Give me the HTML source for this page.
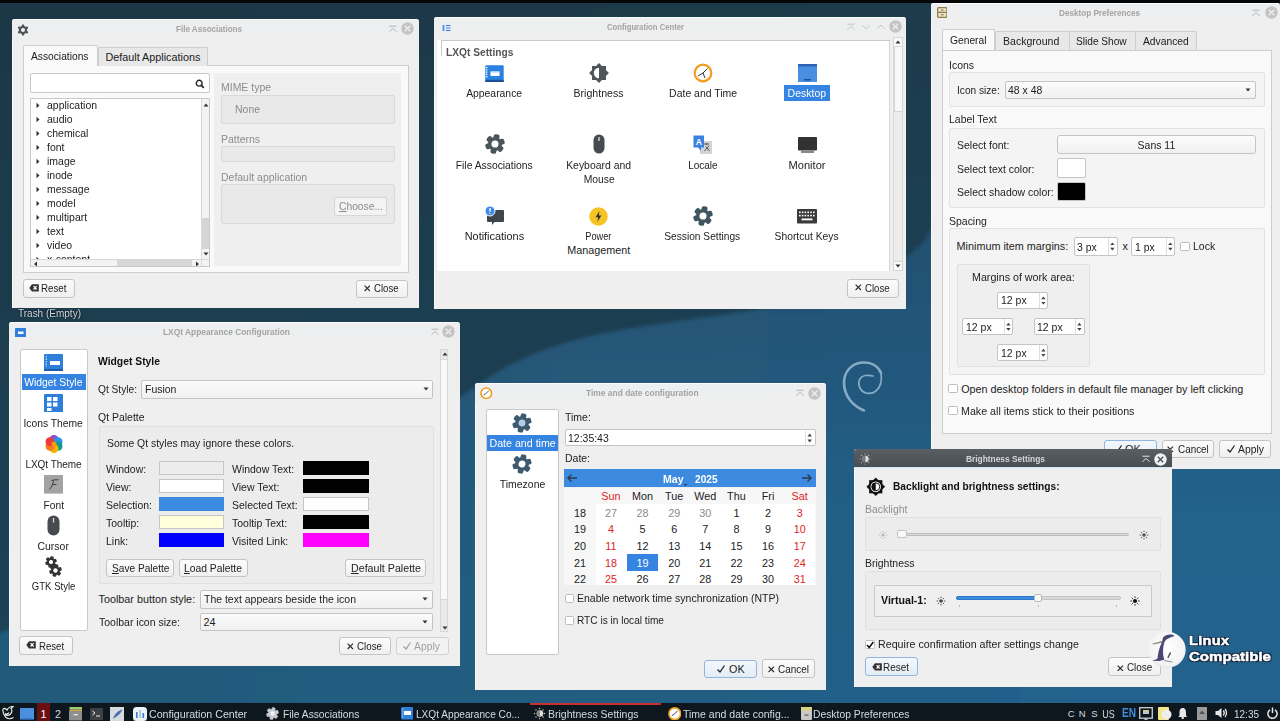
<!DOCTYPE html>
<html><head><meta charset="utf-8"><style>
*{box-sizing:border-box;margin:0;padding:0}
html,body{width:1280px;height:721px;overflow:hidden}
body{position:relative;font-family:"Liberation Sans",sans-serif;color:#222}
.win{background:#efefef;border-radius:3px 3px 0 0;overflow:hidden;box-shadow:inset 1px 0 0 #f9f9f9}
.btn{border:1px solid #c4c4c4;border-radius:3px;background:linear-gradient(#fcfcfc,#f0f0f0)}
.frm{border:1px solid #d4d4d4;background:#f6f6f6;border-radius:2px}
.wht{border:1px solid #c6c6c6;background:#fff;border-radius:2px}
</style></head><body>
<div class="" style="position:absolute;left:0.00px;top:0.00px;width:1280.00px;height:721.00px;background:#22506c"></div>
<svg style="position:absolute;left:0.00px;top:0.00px;" width="1280" height="721" viewBox="0 0 1280 721"><defs><filter id="bgb" filterUnits="userSpaceOnUse" x="-300" y="-300" width="1880" height="1321"><feGaussianBlur stdDeviation="60"/></filter><filter id="sb"><feGaussianBlur stdDeviation="1.6"/></filter><linearGradient id="dk" x1="0" y1="0" x2="0.5" y2="1"><stop offset="0" stop-color="#1d3745"/><stop offset="0.6" stop-color="#1e3d50"/><stop offset="1" stop-color="#204257"/></linearGradient></defs><g filter="url(#bgb)"><rect x="-301" y="-301" width="558" height="446" fill="#1e3846"/><rect x="255" y="-301" width="258" height="446" fill="#1e3a49"/><rect x="511" y="-301" width="258" height="446" fill="#1e3b4b"/><rect x="767" y="-301" width="258" height="446" fill="#1f3c4d"/><rect x="1023" y="-301" width="558" height="446" fill="#1f3d50"/><rect x="-301" y="143" width="558" height="146" fill="#1f4052"/><rect x="255" y="143" width="258" height="146" fill="#1f4052"/><rect x="511" y="143" width="258" height="146" fill="#214a63"/><rect x="767" y="143" width="258" height="146" fill="#23506e"/><rect x="1023" y="143" width="558" height="146" fill="#22506e"/><rect x="-301" y="287" width="558" height="146" fill="#235070"/><rect x="255" y="287" width="258" height="146" fill="#265575"/><rect x="511" y="287" width="258" height="146" fill="#27587a"/><rect x="767" y="287" width="258" height="146" fill="#24567a"/><rect x="1023" y="287" width="558" height="146" fill="#235c84"/><rect x="-301" y="432" width="558" height="146" fill="#245676"/><rect x="255" y="432" width="258" height="146" fill="#245a7c"/><rect x="511" y="432" width="258" height="146" fill="#245d82"/><rect x="767" y="432" width="258" height="146" fill="#235f86"/><rect x="1023" y="432" width="558" height="146" fill="#22628b"/><rect x="-301" y="576" width="558" height="446" fill="#245a7c"/><rect x="255" y="576" width="258" height="446" fill="#245b7e"/><rect x="511" y="576" width="258" height="446" fill="#245d82"/><rect x="767" y="576" width="258" height="446" fill="#23608a"/><rect x="1023" y="576" width="558" height="446" fill="#22628c"/></g><path filter="url(#sb)" d="M-20 -20H1300V0H1010C970 110 950 200 925 240C890 280 820 300 750 311C680 321 620 328 575 340C540 350 510 363 487 379C400 440 200 560 -20 640Z" fill="url(#dk)" opacity="0.92"/></svg>
<svg style="position:absolute;left:836.00px;top:356.00px;" width="54" height="60" viewBox="0 0 54 60"><g fill="none" stroke="#8fb3cc" opacity="0.92" stroke-linecap="round"><path d="M45 17C42 9 34 6 26 6.5C15 7.5 8 16 8 27C8 40 17 50 28 54.5" stroke-width="2.6"/><path d="M45 17C46 24 45 31 40 35C35 39 27 38 24 32C21 26 24 20 30 19.5C33 19.3 35 19.5 37 20" stroke-width="1.7"/></g></svg>
<div class="" style="position:absolute;left:0.00px;top:0.00px;width:1280.00px;height:3.00px;background:#050607"></div>
<div class="win" style="position:absolute;left:12.00px;top:19.00px;width:407.00px;height:289.00px;">
<div class="" style="position:absolute;left:0.00px;top:0.00px;width:407.00px;height:1.00px;background:#fbfbfb"></div>
<div class="" style="position:absolute;left:0.00px;top:1.00px;width:407.00px;height:20.00px;background:linear-gradient(#eceef0,#efefef)"></div>
<svg style="position:absolute;left:5.00px;top:4.50px;" width="12" height="12" viewBox="0 0 12 12"><polygon points="5.27,0.45 6.73,0.45 7.54,2.27 8.45,2.80 10.44,2.59 11.17,3.86 10.00,5.47 10.00,6.53 11.17,8.14 10.44,9.41 8.45,9.20 7.54,9.73 6.73,11.55 5.27,11.55 4.46,9.73 3.55,9.20 1.56,9.41 0.83,8.14 2.00,6.53 2.00,5.47 0.83,3.86 1.56,2.59 3.55,2.80 4.46,2.27" fill="#4d5359"/><circle cx="6" cy="6" r="2.02" fill="#efefef"/></svg>
<div style="position:absolute;white-space:nowrap;left:163.50px;top:3.88px;font-size:9px;line-height:12px;color:#a3a3a3;font-weight:bold;transform:scaleX(0.896);transform-origin:0 0;">File Associations</div>
<svg style="position:absolute;left:375.70px;top:5.00px;" width="10" height="10" viewBox="0 0 10 10"><path d="M1.5 2.2H8.5M1.5 7.8L5 4.3L8.5 7.8" stroke="#b4b4b4" stroke-width="1" fill="none"/></svg>
<svg style="position:absolute;left:389.20px;top:3.10px;" width="13" height="13" viewBox="0 0 13 13"><circle cx="6.5" cy="6.5" r="6.2" fill="#c4c4c4"/><path d="M3.8 3.8L9.2 9.2M9.2 3.8L3.8 9.2" stroke="#eeeeee" stroke-width="1.3"/></svg>
<div class="" style="position:absolute;left:10.50px;top:45.80px;width:386.00px;height:208.70px;border:1px solid #cdcdcd;background:#f9f9f9"></div>
<div class="" style="position:absolute;left:85.50px;top:28.00px;width:110.50px;height:18.50px;border:1px solid #cdcdcd;border-bottom:none;background:#e8e8e8;border-radius:2px 2px 0 0"></div>
<div class="" style="position:absolute;left:10.50px;top:26.00px;width:75.50px;height:20.80px;border:1px solid #cdcdcd;border-bottom:none;background:#f9f9f9;border-radius:2px 2px 0 0"></div>
<div style="position:absolute;white-space:nowrap;left:18.50px;top:30.26px;font-size:10.8px;line-height:14px;color:#202020;transform:scaleX(0.948);transform-origin:0 0;">Associations</div>
<div style="position:absolute;white-space:nowrap;left:93.50px;top:31.26px;font-size:10.8px;line-height:14px;color:#202020;">Default Applications</div>
<div class="" style="position:absolute;left:17.50px;top:54.00px;width:180.00px;height:20.00px;border:1px solid #c8c8c8;background:#fff;border-radius:2px"></div>
<svg style="position:absolute;left:183.00px;top:59.50px;" width="10" height="10" viewBox="0 0 10 10"><circle cx="4.2" cy="4.2" r="2.9" stroke="#222" stroke-width="1.4" fill="none"/><path d="M6.3 6.3L8.8 8.8" stroke="#222" stroke-width="1.7"/></svg>
<div class="" style="position:absolute;left:17.50px;top:78.50px;width:180.00px;height:169.50px;border:1px solid #c8c8c8;background:#fff;overflow:hidden">
<svg style="position:absolute;left:5.50px;top:3.70px;" width="4" height="7" viewBox="0 0 4 7"><path d="M0.5 0.8L3.5 3.5L0.5 6.2Z" fill="#333"/></svg>
<div style="position:absolute;white-space:nowrap;left:16.00px;top:-0.04px;font-size:10.8px;line-height:14px;color:#222;transform:scaleX(0.970);transform-origin:0 0;">application</div>
<svg style="position:absolute;left:5.50px;top:17.70px;" width="4" height="7" viewBox="0 0 4 7"><path d="M0.5 0.8L3.5 3.5L0.5 6.2Z" fill="#333"/></svg>
<div style="position:absolute;white-space:nowrap;left:16.00px;top:13.96px;font-size:10.8px;line-height:14px;color:#222;transform:scaleX(0.970);transform-origin:0 0;">audio</div>
<svg style="position:absolute;left:5.50px;top:31.70px;" width="4" height="7" viewBox="0 0 4 7"><path d="M0.5 0.8L3.5 3.5L0.5 6.2Z" fill="#333"/></svg>
<div style="position:absolute;white-space:nowrap;left:16.00px;top:27.96px;font-size:10.8px;line-height:14px;color:#222;transform:scaleX(0.970);transform-origin:0 0;">chemical</div>
<svg style="position:absolute;left:5.50px;top:45.70px;" width="4" height="7" viewBox="0 0 4 7"><path d="M0.5 0.8L3.5 3.5L0.5 6.2Z" fill="#333"/></svg>
<div style="position:absolute;white-space:nowrap;left:16.00px;top:41.96px;font-size:10.8px;line-height:14px;color:#222;transform:scaleX(0.970);transform-origin:0 0;">font</div>
<svg style="position:absolute;left:5.50px;top:59.70px;" width="4" height="7" viewBox="0 0 4 7"><path d="M0.5 0.8L3.5 3.5L0.5 6.2Z" fill="#333"/></svg>
<div style="position:absolute;white-space:nowrap;left:16.00px;top:55.96px;font-size:10.8px;line-height:14px;color:#222;transform:scaleX(0.970);transform-origin:0 0;">image</div>
<svg style="position:absolute;left:5.50px;top:73.70px;" width="4" height="7" viewBox="0 0 4 7"><path d="M0.5 0.8L3.5 3.5L0.5 6.2Z" fill="#333"/></svg>
<div style="position:absolute;white-space:nowrap;left:16.00px;top:69.96px;font-size:10.8px;line-height:14px;color:#222;transform:scaleX(0.970);transform-origin:0 0;">inode</div>
<svg style="position:absolute;left:5.50px;top:87.70px;" width="4" height="7" viewBox="0 0 4 7"><path d="M0.5 0.8L3.5 3.5L0.5 6.2Z" fill="#333"/></svg>
<div style="position:absolute;white-space:nowrap;left:16.00px;top:83.96px;font-size:10.8px;line-height:14px;color:#222;transform:scaleX(0.970);transform-origin:0 0;">message</div>
<svg style="position:absolute;left:5.50px;top:101.70px;" width="4" height="7" viewBox="0 0 4 7"><path d="M0.5 0.8L3.5 3.5L0.5 6.2Z" fill="#333"/></svg>
<div style="position:absolute;white-space:nowrap;left:16.00px;top:97.96px;font-size:10.8px;line-height:14px;color:#222;transform:scaleX(0.970);transform-origin:0 0;">model</div>
<svg style="position:absolute;left:5.50px;top:115.70px;" width="4" height="7" viewBox="0 0 4 7"><path d="M0.5 0.8L3.5 3.5L0.5 6.2Z" fill="#333"/></svg>
<div style="position:absolute;white-space:nowrap;left:16.00px;top:111.96px;font-size:10.8px;line-height:14px;color:#222;transform:scaleX(0.970);transform-origin:0 0;">multipart</div>
<svg style="position:absolute;left:5.50px;top:129.70px;" width="4" height="7" viewBox="0 0 4 7"><path d="M0.5 0.8L3.5 3.5L0.5 6.2Z" fill="#333"/></svg>
<div style="position:absolute;white-space:nowrap;left:16.00px;top:125.96px;font-size:10.8px;line-height:14px;color:#222;transform:scaleX(0.970);transform-origin:0 0;">text</div>
<svg style="position:absolute;left:5.50px;top:143.70px;" width="4" height="7" viewBox="0 0 4 7"><path d="M0.5 0.8L3.5 3.5L0.5 6.2Z" fill="#333"/></svg>
<div style="position:absolute;white-space:nowrap;left:16.00px;top:139.96px;font-size:10.8px;line-height:14px;color:#222;transform:scaleX(0.970);transform-origin:0 0;">video</div>
<svg style="position:absolute;left:5.50px;top:157.70px;" width="4" height="7" viewBox="0 0 4 7"><path d="M0.5 0.8L3.5 3.5L0.5 6.2Z" fill="#333"/></svg>
<div style="position:absolute;white-space:nowrap;left:16.00px;top:153.96px;font-size:10.8px;line-height:14px;color:#222;transform:scaleX(0.970);transform-origin:0 0;">x-content</div>
<div class="" style="position:absolute;left:170.50px;top:0.00px;width:9.50px;height:160.50px;background:#f3f3f3;border-left:1px solid #d8d8d8"></div>
<div class="" style="position:absolute;left:171.00px;top:119.50px;width:8.50px;height:30.50px;background:#d6d6d6"></div>
<svg style="position:absolute;left:171.50px;top:3.50px;" width="8" height="6" viewBox="0 0 8 6"><path d="M1.5 4.5L4 1.5L6.5 4.5Z" fill="#333"/></svg>
<svg style="position:absolute;left:171.50px;top:152.00px;" width="8" height="6" viewBox="0 0 8 6"><path d="M1.5 1.5L4 4.5L6.5 1.5Z" fill="#333"/></svg>
<div class="" style="position:absolute;left:0.00px;top:160.00px;width:170.50px;height:9.50px;background:#f3f3f3;border-top:1px solid #d8d8d8"></div>
<div class="" style="position:absolute;left:86.00px;top:160.50px;width:75.00px;height:8.50px;background:#d6d6d6"></div>
<svg style="position:absolute;left:1.50px;top:161.00px;" width="8" height="8" viewBox="0 0 8 8"><path d="M5 1.5L2 4L5 6.5Z" fill="#333"/></svg>
<svg style="position:absolute;left:162.50px;top:161.00px;" width="8" height="8" viewBox="0 0 8 8"><path d="M3 1.5L6 4L3 6.5Z" fill="#333"/></svg>
<div class="" style="position:absolute;left:170.50px;top:160.00px;width:9.50px;height:9.50px;background:#f3f3f3;border-left:1px solid #d8d8d8;border-top:1px solid #d8d8d8"></div>
</div>
<div class="" style="position:absolute;left:201.50px;top:53.50px;width:187.50px;height:193.50px;background:#efefef;border-radius:2px"></div>
<div style="position:absolute;white-space:nowrap;left:208.50px;top:60.96px;font-size:10.8px;line-height:14px;color:#8c8c8c;transform:scaleX(0.970);transform-origin:0 0;">MIME type</div>
<div class="" style="position:absolute;left:208.50px;top:75.50px;width:174.50px;height:29.00px;border:1px solid #d9d9d9;background:#e9e9e9;border-radius:2px"></div>
<div style="position:absolute;white-space:nowrap;left:223.00px;top:83.06px;font-size:10.8px;line-height:14px;color:#8a8a8a;transform:scaleX(0.970);transform-origin:0 0;">None</div>
<div style="position:absolute;white-space:nowrap;left:208.50px;top:112.76px;font-size:10.8px;line-height:14px;color:#8c8c8c;transform:scaleX(0.970);transform-origin:0 0;">Patterns</div>
<div class="" style="position:absolute;left:208.50px;top:127.00px;width:174.50px;height:16.00px;border:1px solid #d9d9d9;background:#e9e9e9;border-radius:2px"></div>
<div style="position:absolute;white-space:nowrap;left:208.50px;top:150.66px;font-size:10.8px;line-height:14px;color:#8c8c8c;transform:scaleX(0.970);transform-origin:0 0;">Default application</div>
<div class="" style="position:absolute;left:208.50px;top:165.00px;width:174.50px;height:39.50px;border:1px solid #d9d9d9;background:#e9e9e9;border-radius:2px"></div>
<div class="" style="position:absolute;left:321.50px;top:177.50px;width:53.50px;height:19.00px;border:1px solid #d6d6d6;background:#f3f3f3;border-radius:2px"></div>
<div style="position:absolute;white-space:nowrap;left:326.50px;top:180.26px;font-size:10.8px;line-height:14px;color:#8c8c8c;transform:scaleX(0.952);transform-origin:0 0;"><u>C</u>hoose...</div>
<div class="btn" style="position:absolute;left:10.50px;top:260.00px;width:52.50px;height:18.50px;"></div>
<svg style="position:absolute;left:17.30px;top:265.20px;" width="10" height="8" viewBox="0 0 10 8"><path d="M0.3 3.9L3 0.3H9.8V7.6H3Z" fill="#333"/><path d="M4.6 2.2L7.6 5.5M7.6 2.2L4.6 5.5" stroke="#fff" stroke-width="1.2"/></svg>
<div style="position:absolute;white-space:nowrap;left:29.30px;top:262.26px;font-size:10.8px;line-height:14px;color:#222;transform:scaleX(0.900);transform-origin:0 0;">Reset</div>
<div class="btn" style="position:absolute;left:343.50px;top:260.50px;width:52.50px;height:18.00px;"></div>
<svg style="position:absolute;left:351.50px;top:266.00px;" width="6.6" height="6.6" viewBox="0 0 6.6 6.6"><path d="M0.6 0.6L6 6M6 0.6L0.6 6" stroke="#2a2a2a" stroke-width="1.15"/></svg>
<div style="position:absolute;white-space:nowrap;left:361.80px;top:262.26px;font-size:10.8px;line-height:14px;color:#222;transform:scaleX(0.891);transform-origin:0 0;">Close</div>
</div>
<div style="position:absolute;white-space:nowrap;left:18.40px;top:306.26px;font-size:10.8px;line-height:14px;color:#cfd5da;transform:scaleX(0.926);transform-origin:0 0;text-shadow:0 0 2px #000">Trash (Empty)</div>
<div class="win" style="position:absolute;left:434.00px;top:17.00px;width:472.00px;height:292.00px;">
<div class="" style="position:absolute;left:0.00px;top:0.00px;width:472.00px;height:1.00px;background:#fbfbfb"></div>
<div class="" style="position:absolute;left:0.00px;top:1.00px;width:472.00px;height:20.00px;background:linear-gradient(#eceef0,#efefef)"></div>
<svg style="position:absolute;left:7.50px;top:6.50px;" width="9" height="8" viewBox="0 0 9 8"><rect x="0" y="0" width="9" height="8" fill="#e8eef5"/><rect x="0.5" y="1" width="2" height="6" fill="#5b9be0"/><path d="M4 1.5H8.5M4 4H8.5M4 6.5H8.5" stroke="#3a7bd5" stroke-width="1"/></svg>
<div style="position:absolute;white-space:nowrap;left:172.50px;top:3.88px;font-size:9px;line-height:12px;color:#a3a3a3;font-weight:bold;transform:scaleX(0.856);transform-origin:0 0;">Configuration Center</div>
<svg style="position:absolute;left:411.50px;top:5.00px;" width="10" height="10" viewBox="0 0 10 10"><path d="M1.5 2.2H8.5M1.5 7.8L5 4.3L8.5 7.8" stroke="#c4c4c4" stroke-width="1" fill="none"/></svg>
<svg style="position:absolute;left:426.50px;top:5.00px;" width="10" height="10" viewBox="0 0 10 10"><path d="M1.5 3.3L5 6.8L8.5 3.3" stroke="#c4c4c4" stroke-width="1" fill="none"/></svg>
<svg style="position:absolute;left:441.50px;top:5.00px;" width="10" height="10" viewBox="0 0 10 10"><path d="M1.5 6.5L5 3L8.5 6.5" stroke="#c4c4c4" stroke-width="1" fill="none"/></svg>
<svg style="position:absolute;left:454.50px;top:3.10px;" width="13" height="13" viewBox="0 0 13 13"><circle cx="6.5" cy="6.5" r="6.2" fill="#c4c4c4"/><path d="M3.8 3.8L9.2 9.2M9.2 3.8L3.8 9.2" stroke="#eeeeee" stroke-width="1.3"/></svg>
<div class="" style="position:absolute;left:2.50px;top:23.00px;width:453.50px;height:230.60px;border-right:1px solid #d6d6d6;background:#fff"></div>
<div class="" style="position:absolute;left:7.00px;top:23.00px;width:449.00px;height:1.00px;background:#c9c9c9"></div>
<div class="" style="position:absolute;left:7.00px;top:23.00px;width:1.00px;height:16.00px;background:#c9c9c9"></div>
<div style="position:absolute;white-space:nowrap;left:12.00px;top:27.66px;font-size:10.8px;line-height:14px;color:#555;font-weight:bold;transform:scaleX(0.945);transform-origin:0 0;">LXQt Settings</div>
<div class="" style="position:absolute;left:459.00px;top:19.50px;width:10.00px;height:234.50px;background:#ececec;border:1px solid #dadada"></div>
<div class="" style="position:absolute;left:459.50px;top:29.00px;width:9.00px;height:66.00px;background:#f8f8f8;border:1px solid #d6d6d6"></div>
<div class="" style="position:absolute;left:459.00px;top:19.50px;width:10.00px;height:10.00px;background:#fafafa;border:1px solid #d6d6d6"></div>
<svg style="position:absolute;left:460.00px;top:21.50px;" width="8" height="6" viewBox="0 0 8 6"><path d="M1.5 4.5L4 1.5L6.5 4.5Z" fill="#333"/></svg>
<div class="" style="position:absolute;left:459.00px;top:244.00px;width:10.00px;height:10.00px;background:#fafafa;border:1px solid #d6d6d6"></div>
<svg style="position:absolute;left:460.00px;top:246.00px;" width="8" height="6" viewBox="0 0 8 6"><path d="M1.5 1.5L4 4.5L6.5 1.5Z" fill="#333"/></svg>
<div class="" style="position:absolute;left:350.20px;top:67.80px;width:45.80px;height:16.60px;background:#3584e2"></div>
<div style="position:absolute;white-space:nowrap;left:31.18px;top:68.86px;font-size:10.8px;line-height:14px;color:#232323;transform:scaleX(0.961);transform-origin:50% 0;">Appearance</div>
<div style="position:absolute;white-space:nowrap;left:139.29px;top:68.86px;font-size:10.8px;line-height:14px;color:#232323;transform:scaleX(0.980);transform-origin:50% 0;">Brightness</div>
<div style="position:absolute;white-space:nowrap;left:233.58px;top:68.86px;font-size:10.8px;line-height:14px;color:#232323;transform:scaleX(0.968);transform-origin:50% 0;">Date and Time</div>
<div style="position:absolute;white-space:nowrap;left:352.99px;top:68.86px;font-size:10.8px;line-height:14px;color:#fff;transform:scaleX(0.972);transform-origin:50% 0;">Desktop</div>
<div style="position:absolute;white-space:nowrap;left:20.08px;top:140.76px;font-size:10.8px;line-height:14px;color:#232323;transform:scaleX(0.957);transform-origin:50% 0;">File Associations</div>
<div style="position:absolute;white-space:nowrap;left:131.17px;top:140.76px;font-size:10.8px;line-height:14px;color:#232323;transform:scaleX(0.966);transform-origin:50% 0;">Keyboard and</div>
<div style="position:absolute;white-space:nowrap;left:148.59px;top:154.76px;font-size:10.8px;line-height:14px;color:#232323;transform:scaleX(0.956);transform-origin:50% 0;">Mouse</div>
<div style="position:absolute;white-space:nowrap;left:252.79px;top:140.76px;font-size:10.8px;line-height:14px;color:#232323;transform:scaleX(0.927);transform-origin:50% 0;">Locale</div>
<div style="position:absolute;white-space:nowrap;left:354.79px;top:140.76px;font-size:10.8px;line-height:14px;color:#232323;transform:scaleX(1.027);transform-origin:50% 0;">Monitor</div>
<div style="position:absolute;white-space:nowrap;left:30.89px;top:211.86px;font-size:10.8px;line-height:14px;color:#232323;transform:scaleX(1.011);transform-origin:50% 0;">Notifications</div>
<div style="position:absolute;white-space:nowrap;left:149.49px;top:211.86px;font-size:10.8px;line-height:14px;color:#232323;transform:scaleX(0.849);transform-origin:50% 0;">Power</div>
<div style="position:absolute;white-space:nowrap;left:133.28px;top:225.86px;font-size:10.8px;line-height:14px;color:#232323;">Management</div>
<div style="position:absolute;white-space:nowrap;left:228.48px;top:211.86px;font-size:10.8px;line-height:14px;color:#232323;transform:scaleX(0.945);transform-origin:50% 0;">Session Settings</div>
<div style="position:absolute;white-space:nowrap;left:339.18px;top:211.86px;font-size:10.8px;line-height:14px;color:#232323;transform:scaleX(0.952);transform-origin:50% 0;">Shortcut Keys</div>
<svg style="position:absolute;left:50.50px;top:47.50px;" width="19" height="17" viewBox="0 0 19 17"><rect x="0.3" y="0.3" width="18.4" height="16.7" rx="1" fill="#2a82e0"/><rect x="0.3" y="14.8" width="18.4" height="2.2" fill="#1a4f95"/><rect x="5.5" y="6.5" width="9" height="4.5" fill="#fff"/><rect x="5.5" y="6.5" width="9" height="1.2" fill="#bcd8f6"/><rect x="1" y="1.8" width="1.4" height="1.4" fill="#e8f2fc"/><rect x="1" y="4.1" width="1.4" height="1.4" fill="#e8f2fc"/><rect x="1" y="6.4" width="1.4" height="1.4" fill="#e8f2fc"/><rect x="1" y="8.7" width="1.4" height="1.4" fill="#e8f2fc"/><rect x="1" y="11.0" width="1.4" height="1.4" fill="#e8f2fc"/></svg>
<svg style="position:absolute;left:154.80px;top:45.50px;" width="20" height="20" viewBox="0 0 20 20"><g transform="translate(10,10)"><rect x="-7" y="-7" width="14" height="14" fill="#4e565c"/><rect x="-7" y="-7" width="14" height="14" fill="#4e565c" transform="rotate(45)"/><path d="M0 -5.2A5.2 5.2 0 0 0 0 5.2Z" fill="#fff"/></g></svg>
<svg style="position:absolute;left:259.00px;top:46.00px;" width="20" height="20" viewBox="0 0 20 20"><circle cx="10" cy="10" r="8.3" fill="#fff" stroke="#f39c1f" stroke-width="2.2"/><path d="M10 10L14.5 5.5M10 10L5 13M10 10L12 15" stroke="#333" stroke-width="1" fill="none"/></svg>
<svg style="position:absolute;left:363.50px;top:47.00px;" width="19" height="18" viewBox="0 0 19 18"><rect x="0" y="0" width="19" height="18" fill="#4a8ee2"/><rect x="0" y="0" width="19" height="2.5" fill="#2c63b0"/><rect x="6" y="15" width="7" height="1.5" fill="#1d4f94"/></svg>
<svg style="position:absolute;left:50.50px;top:117.00px;" width="20" height="20" viewBox="0 0 20 20"><g transform="translate(10,10) rotate(12)"><circle r="6.86" fill="#4a545b"/><rect x="-2.94" y="-9.80" width="5.88" height="5.39" rx="1.96" fill="#4a545b" transform="rotate(0)"/><rect x="-2.94" y="-9.80" width="5.88" height="5.39" rx="1.96" fill="#4a545b" transform="rotate(60)"/><rect x="-2.94" y="-9.80" width="5.88" height="5.39" rx="1.96" fill="#4a545b" transform="rotate(120)"/><rect x="-2.94" y="-9.80" width="5.88" height="5.39" rx="1.96" fill="#4a545b" transform="rotate(180)"/><rect x="-2.94" y="-9.80" width="5.88" height="5.39" rx="1.96" fill="#4a545b" transform="rotate(240)"/><rect x="-2.94" y="-9.80" width="5.88" height="5.39" rx="1.96" fill="#4a545b" transform="rotate(300)"/><circle r="3.53" fill="#fff"/></g></svg>
<svg style="position:absolute;left:158.00px;top:117.00px;" width="14" height="20" viewBox="0 0 14 20"><rect x="1.5" y="0.5" width="11" height="19" rx="5.5" fill="#474b4f"/><path d="M7 3V7" stroke="#e8e8e8" stroke-width="1.2"/></svg>
<svg style="position:absolute;left:258.50px;top:117.50px;" width="20" height="20" viewBox="0 0 20 20"><rect x="7" y="6" width="12" height="13" fill="#d4d4d4"/><path d="M11 9H16M13.5 8V10M11.5 16L16 10.5M13 11.5L16.5 16" stroke="#555" stroke-width="1" fill="none"/><path d="M0.5 0.5H11V12.5H8V16L5 12.5H0.5Z" fill="#3a81e0"/><text x="5.8" y="10" font-size="8.5" font-family="Liberation Sans" font-weight="bold" fill="#fff" text-anchor="middle">A</text></svg>
<svg style="position:absolute;left:363.50px;top:119.50px;" width="19" height="17" viewBox="0 0 19 17"><rect x="0" y="0" width="19" height="13.5" rx="1" fill="#323232"/><rect x="3" y="13.5" width="13" height="2.5" fill="#888"/></svg>
<svg style="position:absolute;left:50.00px;top:188.00px;" width="21" height="20" viewBox="0 0 21 20"><rect x="3" y="5" width="17" height="12" rx="1" fill="#3f464c"/><path d="M8 16.5V20L11 16.5Z" fill="#3f464c"/><circle cx="6" cy="6" r="5" fill="#3e8ae6" stroke="#fff" stroke-width="1"/><path d="M6 3V6.8M6 8.2V9" stroke="#fff" stroke-width="1.4"/></svg>
<svg style="position:absolute;left:155.00px;top:189.50px;" width="19" height="19" viewBox="0 0 19 19"><circle cx="9.5" cy="9.5" r="9.3" fill="#f6c324"/><path d="M10.5 4L6.5 10.2H9.2L8.3 15L12.4 8.6H9.8Z" fill="#333"/></svg>
<svg style="position:absolute;left:258.50px;top:189.00px;" width="20" height="20" viewBox="0 0 20 20"><g transform="translate(10,10) rotate(12)"><circle r="6.86" fill="#3f5560"/><rect x="-2.94" y="-9.80" width="5.88" height="5.39" rx="1.96" fill="#3f5560" transform="rotate(0)"/><rect x="-2.94" y="-9.80" width="5.88" height="5.39" rx="1.96" fill="#3f5560" transform="rotate(60)"/><rect x="-2.94" y="-9.80" width="5.88" height="5.39" rx="1.96" fill="#3f5560" transform="rotate(120)"/><rect x="-2.94" y="-9.80" width="5.88" height="5.39" rx="1.96" fill="#3f5560" transform="rotate(180)"/><rect x="-2.94" y="-9.80" width="5.88" height="5.39" rx="1.96" fill="#3f5560" transform="rotate(240)"/><rect x="-2.94" y="-9.80" width="5.88" height="5.39" rx="1.96" fill="#3f5560" transform="rotate(300)"/><circle r="3.53" fill="#fff"/></g></svg>
<svg style="position:absolute;left:362.50px;top:191.50px;" width="20" height="15" viewBox="0 0 20 15"><rect x="0" y="0" width="20" height="14.5" rx="1" fill="#3a3a3a"/><rect x="2.0" y="2.5" width="1.6" height="1.6" fill="#fff"/><rect x="2.0" y="5.8" width="1.6" height="1.6" fill="#fff"/><rect x="4.8" y="2.5" width="1.6" height="1.6" fill="#fff"/><rect x="4.8" y="5.8" width="1.6" height="1.6" fill="#fff"/><rect x="7.6" y="2.5" width="1.6" height="1.6" fill="#fff"/><rect x="7.6" y="5.8" width="1.6" height="1.6" fill="#fff"/><rect x="10.4" y="2.5" width="1.6" height="1.6" fill="#fff"/><rect x="10.4" y="5.8" width="1.6" height="1.6" fill="#fff"/><rect x="13.2" y="2.5" width="1.6" height="1.6" fill="#fff"/><rect x="13.2" y="5.8" width="1.6" height="1.6" fill="#fff"/><rect x="16.0" y="2.5" width="1.6" height="1.6" fill="#fff"/><rect x="16.0" y="5.8" width="1.6" height="1.6" fill="#fff"/><rect x="4.5" y="9.5" width="11" height="1.8" fill="#fff"/></svg>
<div class="btn" style="position:absolute;left:413.00px;top:261.50px;width:52.00px;height:19.00px;"></div>
<svg style="position:absolute;left:421.00px;top:267.30px;" width="6.6" height="6.6" viewBox="0 0 6.6 6.6"><path d="M0.6 0.6L6 6M6 0.6L0.6 6" stroke="#2a2a2a" stroke-width="1.15"/></svg>
<div style="position:absolute;white-space:nowrap;left:431.30px;top:263.66px;font-size:10.8px;line-height:14px;color:#222;transform:scaleX(0.891);transform-origin:0 0;">Close</div>
</div>
<div class="win" style="position:absolute;left:931.00px;top:3.00px;width:349.00px;height:466.00px;">
<div class="" style="position:absolute;left:0.00px;top:0.00px;width:349.00px;height:1.00px;background:#fbfbfb"></div>
<div class="" style="position:absolute;left:0.00px;top:1.00px;width:349.00px;height:20.00px;background:linear-gradient(#eceef0,#efefef)"></div>
<svg style="position:absolute;left:5.50px;top:3.90px;" width="10.6" height="11" viewBox="0 0 10.6 11"><rect x="0.65" y="0.65" width="9.3" height="9.7" rx="0.8" fill="#ece2c2" stroke="#8e7f4e" stroke-width="1.3"/><path d="M1 5.4H9.6" stroke="#8e7f4e" stroke-width="1.1"/><path d="M4 3.1H6.6M4 7.8H6.6" stroke="#6e6240" stroke-width="0.9"/></svg>
<div style="position:absolute;white-space:nowrap;left:127.60px;top:3.88px;font-size:9px;line-height:12px;color:#a3a3a3;font-weight:bold;transform:scaleX(0.905);transform-origin:0 0;">Desktop Preferences</div>
<svg style="position:absolute;left:320.30px;top:5.00px;" width="10" height="10" viewBox="0 0 10 10"><path d="M1.5 2.2H8.5M1.5 7.8L5 4.3L8.5 7.8" stroke="#b4b4b4" stroke-width="1" fill="none"/></svg>
<svg style="position:absolute;left:333.50px;top:3.30px;" width="13" height="13" viewBox="0 0 13 13"><circle cx="6.5" cy="6.5" r="6.2" fill="#c4c4c4"/><path d="M3.8 3.8L9.2 9.2M9.2 3.8L3.8 9.2" stroke="#eeeeee" stroke-width="1.3"/></svg>
<div class="" style="position:absolute;left:10.50px;top:46.50px;width:330.50px;height:384.50px;border:1px solid #cdcdcd;background:#f9f9f9"></div>
<div class="" style="position:absolute;left:63.50px;top:28.30px;width:75.00px;height:18.70px;border:1px solid #cdcdcd;border-bottom:none;background:#e8e8e8;border-radius:2px 2px 0 0"></div>
<div class="" style="position:absolute;left:138.00px;top:28.30px;width:66.50px;height:18.70px;border:1px solid #cdcdcd;border-bottom:none;background:#e8e8e8;border-radius:2px 2px 0 0"></div>
<div class="" style="position:absolute;left:204.00px;top:28.30px;width:62.00px;height:18.70px;border:1px solid #cdcdcd;border-bottom:none;background:#e8e8e8;border-radius:2px 2px 0 0"></div>
<div class="" style="position:absolute;left:10.50px;top:26.20px;width:53.50px;height:21.30px;border:1px solid #cdcdcd;border-bottom:none;background:#f9f9f9;border-radius:2px 2px 0 0"></div>
<div style="position:absolute;white-space:nowrap;left:18.50px;top:30.36px;font-size:10.8px;line-height:14px;color:#202020;transform:scaleX(0.950);transform-origin:0 0;">General</div>
<div style="position:absolute;white-space:nowrap;left:72.20px;top:31.26px;font-size:10.8px;line-height:14px;color:#202020;transform:scaleX(0.977);transform-origin:0 0;">Background</div>
<div style="position:absolute;white-space:nowrap;left:145.10px;top:31.26px;font-size:10.8px;line-height:14px;color:#202020;transform:scaleX(0.938);transform-origin:0 0;">Slide Show</div>
<div style="position:absolute;white-space:nowrap;left:211.60px;top:31.26px;font-size:10.8px;line-height:14px;color:#202020;transform:scaleX(0.953);transform-origin:0 0;">Advanced</div>
<div style="position:absolute;white-space:nowrap;left:17.60px;top:54.56px;font-size:10.8px;line-height:14px;color:#222;transform:scaleX(0.970);transform-origin:0 0;">Icons</div>
<div class="" style="position:absolute;left:18.00px;top:69.40px;width:315.60px;height:35.00px;border:1px solid #e2e2e2;background:#f4f4f4;border-radius:2px"></div>
<div style="position:absolute;white-space:nowrap;left:25.60px;top:79.76px;font-size:10.8px;line-height:14px;color:#222;transform:scaleX(0.938);transform-origin:0 0;">Icon size:</div>
<div class="" style="position:absolute;left:73.50px;top:77.70px;width:251.80px;height:18.80px;border:1px solid #c4c4c4;background:linear-gradient(#fbfbfb,#f0f0f0);border-radius:2px"></div>
<svg style="position:absolute;left:313.30px;top:84.10px;" width="8" height="6" viewBox="0 0 8 6"><path d="M1.5 1.5H6.5L4 4.5Z" fill="#333"/></svg>
<div style="position:absolute;white-space:nowrap;left:76.90px;top:80.16px;font-size:10.8px;line-height:14px;color:#222;transform:scaleX(0.970);transform-origin:0 0;">48 x 48</div>
<div style="position:absolute;white-space:nowrap;left:17.60px;top:108.56px;font-size:10.8px;line-height:14px;color:#222;transform:scaleX(0.970);transform-origin:0 0;">Label Text</div>
<div class="" style="position:absolute;left:18.00px;top:124.80px;width:315.60px;height:80.20px;border:1px solid #e2e2e2;background:#f4f4f4;border-radius:2px"></div>
<div style="position:absolute;white-space:nowrap;left:25.60px;top:135.26px;font-size:10.8px;line-height:14px;color:#222;transform:scaleX(0.970);transform-origin:0 0;">Select font:</div>
<div class="btn" style="position:absolute;left:125.50px;top:132.20px;width:199.80px;height:18.80px;"></div>
<div style="position:absolute;white-space:nowrap;left:205.99px;top:134.86px;font-size:10.8px;line-height:14px;color:#222;transform:scaleX(0.970);transform-origin:50% 0;">Sans 11</div>
<div style="position:absolute;white-space:nowrap;left:25.60px;top:158.96px;font-size:10.8px;line-height:14px;color:#222;transform:scaleX(0.970);transform-origin:0 0;">Select text color:</div>
<div class="" style="position:absolute;left:125.50px;top:155.00px;width:29.10px;height:19.70px;border:1px solid #c4c4c4;background:#fff;border-radius:2px"></div>
<div style="position:absolute;white-space:nowrap;left:25.60px;top:181.86px;font-size:10.8px;line-height:14px;color:#222;transform:scaleX(0.970);transform-origin:0 0;">Select shadow color:</div>
<div class="" style="position:absolute;left:125.50px;top:178.90px;width:29.10px;height:19.10px;border:1px solid #c4c4c4;background:#000;border-radius:2px"></div>
<div style="position:absolute;white-space:nowrap;left:17.60px;top:210.96px;font-size:10.8px;line-height:14px;color:#222;transform:scaleX(0.970);transform-origin:0 0;">Spacing</div>
<div class="" style="position:absolute;left:18.00px;top:225.00px;width:315.70px;height:147.00px;border:1px solid #e2e2e2;background:#f4f4f4;border-radius:2px"></div>
<div style="position:absolute;white-space:nowrap;left:25.60px;top:235.96px;font-size:10.8px;line-height:14px;color:#222;">Minimum item margins:</div>
<div class="" style="position:absolute;left:143.00px;top:234.20px;width:43.70px;height:18.80px;border:1px solid #c4c4c4;background:#fff;border-radius:2px"></div>
<div class="" style="position:absolute;left:177.20px;top:235.20px;width:1.00px;height:16.80px;background:#dedede"></div>
<svg style="position:absolute;left:178.20px;top:235.20px;" width="7" height="16.80000000000001" viewBox="0 0 7 16.80000000000001"><path d="M1.2 7.1L3.4 4.4L5.6 7.1Z" fill="#444"/><path d="M1.2 9.7L3.4 12.4L5.6 9.7Z" fill="#444"/></svg>
<div style="position:absolute;white-space:nowrap;left:146.30px;top:237.26px;font-size:10.8px;line-height:14px;color:#222;transform:scaleX(0.970);transform-origin:0 0;">3 px</div>
<div style="position:absolute;white-space:nowrap;left:191.50px;top:235.96px;font-size:10.8px;line-height:14px;color:#222;">x</div>
<div class="" style="position:absolute;left:200.40px;top:234.20px;width:44.10px;height:18.80px;border:1px solid #c4c4c4;background:#fff;border-radius:2px"></div>
<div class="" style="position:absolute;left:235.00px;top:235.20px;width:1.00px;height:16.80px;background:#dedede"></div>
<svg style="position:absolute;left:236.00px;top:235.20px;" width="7" height="16.80000000000001" viewBox="0 0 7 16.80000000000001"><path d="M1.2 7.1L3.4 4.4L5.6 7.1Z" fill="#444"/><path d="M1.2 9.7L3.4 12.4L5.6 9.7Z" fill="#444"/></svg>
<div style="position:absolute;white-space:nowrap;left:203.50px;top:237.26px;font-size:10.8px;line-height:14px;color:#222;transform:scaleX(0.970);transform-origin:0 0;">1 px</div>
<div class="" style="position:absolute;left:249.00px;top:238.50px;width:9.50px;height:9.50px;border:1px solid #bdbdbd;background:#fff;border-radius:1.5px"></div>
<div style="position:absolute;white-space:nowrap;left:261.60px;top:235.96px;font-size:10.8px;line-height:14px;color:#222;transform:scaleX(0.970);transform-origin:0 0;">Lock</div>
<div class="" style="position:absolute;left:26.20px;top:260.70px;width:132.40px;height:103.70px;border:1px solid #e0e0e0;background:#efefef;border-radius:2px"></div>
<div style="position:absolute;white-space:nowrap;left:40.90px;top:266.76px;font-size:10.8px;line-height:14px;color:#222;transform:scaleX(0.990);transform-origin:0 0;">Margins of work area:</div>
<div class="" style="position:absolute;left:66.20px;top:288.80px;width:50.90px;height:17.10px;border:1px solid #c4c4c4;background:#fff;border-radius:2px"></div>
<div class="" style="position:absolute;left:107.60px;top:289.80px;width:1.00px;height:15.10px;background:#dedede"></div>
<svg style="position:absolute;left:108.60px;top:289.80px;" width="7" height="15.099999999999966" viewBox="0 0 7 15.099999999999966"><path d="M1.2 6.3L3.4 3.6L5.6 6.3Z" fill="#444"/><path d="M1.2 8.9L3.4 11.6L5.6 8.9Z" fill="#444"/></svg>
<div style="position:absolute;white-space:nowrap;left:69.80px;top:290.16px;font-size:10.8px;line-height:14px;color:#222;transform:scaleX(0.970);transform-origin:0 0;">12 px</div>
<div class="" style="position:absolute;left:31.10px;top:314.70px;width:50.90px;height:17.70px;border:1px solid #c4c4c4;background:#fff;border-radius:2px"></div>
<div class="" style="position:absolute;left:72.50px;top:315.70px;width:1.00px;height:15.70px;background:#dedede"></div>
<svg style="position:absolute;left:73.50px;top:315.70px;" width="7" height="15.699999999999989" viewBox="0 0 7 15.699999999999989"><path d="M1.2 6.5L3.4 3.8L5.6 6.5Z" fill="#444"/><path d="M1.2 9.1L3.4 11.8L5.6 9.1Z" fill="#444"/></svg>
<div style="position:absolute;white-space:nowrap;left:34.50px;top:316.66px;font-size:10.8px;line-height:14px;color:#222;transform:scaleX(0.970);transform-origin:0 0;">12 px</div>
<div class="" style="position:absolute;left:102.50px;top:314.70px;width:51.20px;height:17.70px;border:1px solid #c4c4c4;background:#fff;border-radius:2px"></div>
<div class="" style="position:absolute;left:144.20px;top:315.70px;width:1.00px;height:15.70px;background:#dedede"></div>
<svg style="position:absolute;left:145.20px;top:315.70px;" width="7" height="15.699999999999989" viewBox="0 0 7 15.699999999999989"><path d="M1.2 6.5L3.4 3.8L5.6 6.5Z" fill="#444"/><path d="M1.2 9.1L3.4 11.8L5.6 9.1Z" fill="#444"/></svg>
<div style="position:absolute;white-space:nowrap;left:106.00px;top:316.66px;font-size:10.8px;line-height:14px;color:#222;transform:scaleX(0.970);transform-origin:0 0;">12 px</div>
<div class="" style="position:absolute;left:66.20px;top:340.70px;width:50.90px;height:17.60px;border:1px solid #c4c4c4;background:#fff;border-radius:2px"></div>
<div class="" style="position:absolute;left:107.60px;top:341.70px;width:1.00px;height:15.60px;background:#dedede"></div>
<svg style="position:absolute;left:108.60px;top:341.70px;" width="7" height="15.600000000000023" viewBox="0 0 7 15.600000000000023"><path d="M1.2 6.5L3.4 3.8L5.6 6.5Z" fill="#444"/><path d="M1.2 9.1L3.4 11.8L5.6 9.1Z" fill="#444"/></svg>
<div style="position:absolute;white-space:nowrap;left:69.80px;top:342.56px;font-size:10.8px;line-height:14px;color:#222;transform:scaleX(0.970);transform-origin:0 0;">12 px</div>
<div class="" style="position:absolute;left:17.40px;top:380.50px;width:9.50px;height:9.50px;border:1px solid #bdbdbd;background:#fff;border-radius:1.5px"></div>
<div style="position:absolute;white-space:nowrap;left:30.20px;top:379.06px;font-size:10.8px;line-height:14px;color:#222;">Open desktop folders in default file manager by left clicking</div>
<div class="" style="position:absolute;left:17.40px;top:402.50px;width:9.50px;height:9.50px;border:1px solid #bdbdbd;background:#fff;border-radius:1.5px"></div>
<div style="position:absolute;white-space:nowrap;left:30.20px;top:400.96px;font-size:10.8px;line-height:14px;color:#222;transform:scaleX(0.990);transform-origin:0 0;">Make all items stick to their positions</div>
<div class="" style="position:absolute;left:172.70px;top:436.50px;width:52.90px;height:18.10px;border:1px solid #8fb6e0;border-radius:3px;background:linear-gradient(#f4f8fc,#e3ecf5)"></div>
<svg style="position:absolute;left:182.00px;top:440.50px;" width="10" height="10" viewBox="0 0 10 10"><path d="M1.5 5.5L4 8L8.5 1.5" stroke="#222" stroke-width="1.3" fill="none"/></svg>
<div style="position:absolute;white-space:nowrap;left:194.00px;top:438.76px;font-size:10.8px;line-height:14px;color:#222;">OK</div>
<div class="btn" style="position:absolute;left:230.60px;top:436.50px;width:52.80px;height:18.10px;"></div>
<svg style="position:absolute;left:236.30px;top:442.50px;" width="6.6" height="6.6" viewBox="0 0 6.6 6.6"><path d="M0.6 0.6L6 6M6 0.6L0.6 6" stroke="#2a2a2a" stroke-width="1.15"/></svg>
<div style="position:absolute;white-space:nowrap;left:246.60px;top:438.56px;font-size:10.8px;line-height:14px;color:#222;transform:scaleX(0.916);transform-origin:0 0;">Cancel</div>
<div class="btn" style="position:absolute;left:287.70px;top:436.50px;width:52.70px;height:18.10px;"></div>
<svg style="position:absolute;left:294.50px;top:440.50px;" width="10" height="10" viewBox="0 0 10 10"><path d="M1.5 5.5L4 8L8.5 1.5" stroke="#222" stroke-width="1.3" fill="none"/></svg>
<div style="position:absolute;white-space:nowrap;left:306.50px;top:438.76px;font-size:10.8px;line-height:14px;color:#222;transform:scaleX(0.962);transform-origin:0 0;">Apply</div>
</div>
<div class="win" style="position:absolute;left:9.00px;top:322.00px;width:451.00px;height:344.00px;">
<div class="" style="position:absolute;left:0.00px;top:0.00px;width:451.00px;height:1.00px;background:#fbfbfb"></div>
<div class="" style="position:absolute;left:0.00px;top:1.00px;width:451.00px;height:20.00px;background:linear-gradient(#eceef0,#efefef)"></div>
<svg style="position:absolute;left:5.80px;top:5.80px;" width="11" height="9.5" viewBox="0 0 11 9.5"><rect x="0" y="0" width="11" height="9.5" rx="0.8" fill="#2d7fd9"/><rect x="3" y="3.5" width="5.5" height="2.5" fill="#fff"/></svg>
<div style="position:absolute;white-space:nowrap;left:154.40px;top:3.88px;font-size:9px;line-height:12px;color:#a3a3a3;font-weight:bold;transform:scaleX(0.929);transform-origin:0 0;">LXQt Appearance Configuration</div>
<svg style="position:absolute;left:420.50px;top:5.00px;" width="10" height="10" viewBox="0 0 10 10"><path d="M1.5 2.2H8.5M1.5 7.8L5 4.3L8.5 7.8" stroke="#b4b4b4" stroke-width="1" fill="none"/></svg>
<svg style="position:absolute;left:433.00px;top:3.40px;" width="13" height="13" viewBox="0 0 13 13"><circle cx="6.5" cy="6.5" r="6.2" fill="#c4c4c4"/><path d="M3.8 3.8L9.2 9.2M9.2 3.8L3.8 9.2" stroke="#eeeeee" stroke-width="1.3"/></svg>
<div class="" style="position:absolute;left:10.70px;top:27.00px;width:68.50px;height:281.70px;border:1px solid #c9c9c9;background:#fff;border-radius:2px"></div>
<div class="" style="position:absolute;left:12.60px;top:52.40px;width:64.50px;height:15.50px;background:#3584e2"></div>
<div style="position:absolute;white-space:nowrap;left:14.29px;top:53.26px;font-size:10.8px;line-height:14px;color:#fff;transform:scaleX(0.962);transform-origin:50% 0;">Widget Style</div>
<div style="position:absolute;white-space:nowrap;left:13.48px;top:94.06px;font-size:10.8px;line-height:14px;color:#222;transform:scaleX(0.954);transform-origin:50% 0;">Icons Theme</div>
<div style="position:absolute;white-space:nowrap;left:14.08px;top:134.76px;font-size:10.8px;line-height:14px;color:#222;transform:scaleX(0.922);transform-origin:50% 0;">LXQt Theme</div>
<div style="position:absolute;white-space:nowrap;left:33.79px;top:175.86px;font-size:10.8px;line-height:14px;color:#222;transform:scaleX(0.944);transform-origin:50% 0;">Font</div>
<div style="position:absolute;white-space:nowrap;left:28.40px;top:216.86px;font-size:10.8px;line-height:14px;color:#222;transform:scaleX(0.970);transform-origin:50% 0;">Cursor</div>
<div style="position:absolute;white-space:nowrap;left:19.99px;top:256.86px;font-size:10.8px;line-height:14px;color:#222;transform:scaleX(0.886);transform-origin:50% 0;">GTK Style</div>
<svg style="position:absolute;left:35.00px;top:32.00px;" width="19" height="17" viewBox="0 0 19 17"><rect x="0" y="0" width="19" height="17" rx="1" fill="#2d7fd9"/><rect x="0" y="15" width="19" height="2" fill="#1e5aa8"/><rect x="6" y="7" width="10" height="4" fill="#fff"/><path d="M2.3 2V13" stroke="#cfe3fa" stroke-width="1.3" stroke-dasharray="1.3 1.3"/></svg>
<svg style="position:absolute;left:35.00px;top:71.80px;" width="19" height="18.5" viewBox="0 0 19 18.5"><rect x="0" y="0" width="19" height="18.5" rx="1" fill="#2d7fd9"/><rect x="3" y="3" width="4.5" height="4" fill="#fff"/><rect x="9" y="3" width="4.5" height="4" fill="#fff"/><rect x="3" y="8.5" width="4.5" height="4" fill="#fff"/><rect x="9" y="8.5" width="4.5" height="4" fill="#fff"/><rect x="3" y="14" width="4.5" height="3" fill="#fff"/></svg>
<svg style="position:absolute;left:35.60px;top:112.60px;" width="18" height="18" viewBox="0 0 18 18"><circle cx="9.00" cy="4.40" r="4.5" fill="#8e4fd0"/><circle cx="12.98" cy="6.70" r="4.5" fill="#2196e8"/><circle cx="12.98" cy="11.30" r="4.5" fill="#0f9a8a"/><circle cx="9.00" cy="13.60" r="4.5" fill="#f5b50a"/><circle cx="5.02" cy="11.30" r="4.5" fill="#f77b1a"/><circle cx="5.02" cy="6.70" r="4.5" fill="#ea3a3a"/><circle cx="9" cy="9" r="2.5" fill="#f59a12"/></svg>
<svg style="position:absolute;left:35.00px;top:153.00px;" width="19" height="18.6" viewBox="0 0 19 18.6"><rect x="0" y="0" width="19" height="18.6" fill="#a3a3a3"/><path d="M7.5 5.5C9.5 4.8 12 4.6 14.5 4.8M8.8 9.5H12.5M9.5 5.3C9 8.5 8 11.5 5.5 14.5" stroke="#333" stroke-width="0.9" fill="none"/></svg>
<svg style="position:absolute;left:38.20px;top:193.20px;" width="13" height="21" viewBox="0 0 13 21"><rect x="0.5" y="0.5" width="12" height="20" rx="6" fill="#474b4f"/><path d="M6.5 3V7.5" stroke="#ddd" stroke-width="1.2"/></svg>
<svg style="position:absolute;left:36.00px;top:234.00px;" width="17" height="21" viewBox="0 0 17 21"><g transform="translate(6,6) rotate(12)"><circle r="4.06" fill="#333"/><rect x="-1.74" y="-5.80" width="3.48" height="3.19" rx="1.16" fill="#333" transform="rotate(0)"/><rect x="-1.74" y="-5.80" width="3.48" height="3.19" rx="1.16" fill="#333" transform="rotate(60)"/><rect x="-1.74" y="-5.80" width="3.48" height="3.19" rx="1.16" fill="#333" transform="rotate(120)"/><rect x="-1.74" y="-5.80" width="3.48" height="3.19" rx="1.16" fill="#333" transform="rotate(180)"/><rect x="-1.74" y="-5.80" width="3.48" height="3.19" rx="1.16" fill="#333" transform="rotate(240)"/><rect x="-1.74" y="-5.80" width="3.48" height="3.19" rx="1.16" fill="#333" transform="rotate(300)"/><circle r="2.09" fill="#fff"/></g><g transform="translate(10.5,14.5) rotate(12)"><circle r="4.41" fill="#333"/><rect x="-1.89" y="-6.30" width="3.78" height="3.47" rx="1.26" fill="#333" transform="rotate(0)"/><rect x="-1.89" y="-6.30" width="3.78" height="3.47" rx="1.26" fill="#333" transform="rotate(60)"/><rect x="-1.89" y="-6.30" width="3.78" height="3.47" rx="1.26" fill="#333" transform="rotate(120)"/><rect x="-1.89" y="-6.30" width="3.78" height="3.47" rx="1.26" fill="#333" transform="rotate(180)"/><rect x="-1.89" y="-6.30" width="3.78" height="3.47" rx="1.26" fill="#333" transform="rotate(240)"/><rect x="-1.89" y="-6.30" width="3.78" height="3.47" rx="1.26" fill="#333" transform="rotate(300)"/><circle r="2.27" fill="#fff"/></g></svg>
<div style="position:absolute;white-space:nowrap;left:89.30px;top:32.26px;font-size:10.8px;line-height:14px;color:#111;font-weight:bold;transform:scaleX(0.958);transform-origin:0 0;">Widget Style</div>
<div style="position:absolute;white-space:nowrap;left:89.30px;top:60.06px;font-size:10.8px;line-height:14px;color:#222;transform:scaleX(0.942);transform-origin:0 0;">Qt Style:</div>
<div class="" style="position:absolute;left:132.40px;top:58.20px;width:292.10px;height:18.40px;border:1px solid #c4c4c4;background:linear-gradient(#fbfbfb,#f0f0f0);border-radius:2px"></div>
<svg style="position:absolute;left:412.50px;top:64.40px;" width="8" height="6" viewBox="0 0 8 6"><path d="M1.5 1.5H6.5L4 4.5Z" fill="#333"/></svg>
<div style="position:absolute;white-space:nowrap;left:135.50px;top:60.46px;font-size:10.8px;line-height:14px;color:#222;transform:scaleX(0.970);transform-origin:0 0;">Fusion</div>
<div style="position:absolute;white-space:nowrap;left:89.30px;top:88.26px;font-size:10.8px;line-height:14px;color:#222;transform:scaleX(0.970);transform-origin:0 0;">Qt Palette</div>
<div class="" style="position:absolute;left:90.30px;top:103.80px;width:334.50px;height:158.40px;border:1px solid #e0e0e0;background:#ececec;border-radius:2px"></div>
<div style="position:absolute;white-space:nowrap;left:97.50px;top:114.46px;font-size:10.8px;line-height:14px;color:#222;transform:scaleX(0.965);transform-origin:0 0;">Some Qt styles may ignore these colors.</div>
<div style="position:absolute;white-space:nowrap;left:96.90px;top:140.16px;font-size:10.8px;line-height:14px;color:#222;transform:scaleX(0.970);transform-origin:0 0;">Window:</div>
<div style="position:absolute;white-space:nowrap;left:222.90px;top:140.16px;font-size:10.8px;line-height:14px;color:#222;transform:scaleX(0.970);transform-origin:0 0;">Window Text:</div>
<div class="" style="position:absolute;left:149.60px;top:139.30px;width:65.90px;height:13.70px;background:#ececec;border:1px solid #c6c6c6"></div>
<div class="" style="position:absolute;left:293.90px;top:139.30px;width:66.20px;height:13.70px;background:#000;border:1px solid #000"></div>
<div style="position:absolute;white-space:nowrap;left:96.90px;top:158.06px;font-size:10.8px;line-height:14px;color:#222;transform:scaleX(0.970);transform-origin:0 0;">View:</div>
<div style="position:absolute;white-space:nowrap;left:222.90px;top:158.06px;font-size:10.8px;line-height:14px;color:#222;transform:scaleX(0.970);transform-origin:0 0;">View Text:</div>
<div class="" style="position:absolute;left:149.60px;top:157.30px;width:65.90px;height:13.70px;background:#fff;border:1px solid #c6c6c6"></div>
<div class="" style="position:absolute;left:293.90px;top:157.30px;width:66.20px;height:13.70px;background:#000;border:1px solid #000"></div>
<div style="position:absolute;white-space:nowrap;left:96.90px;top:175.96px;font-size:10.8px;line-height:14px;color:#222;transform:scaleX(0.970);transform-origin:0 0;">Selection:</div>
<div style="position:absolute;white-space:nowrap;left:222.90px;top:175.96px;font-size:10.8px;line-height:14px;color:#222;transform:scaleX(0.970);transform-origin:0 0;">Selected Text:</div>
<div class="" style="position:absolute;left:149.60px;top:175.30px;width:65.90px;height:13.70px;background:#3b8ae0;border:1px solid #3b8ae0"></div>
<div class="" style="position:absolute;left:293.90px;top:175.30px;width:66.20px;height:13.70px;background:#fff;border:1px solid #c6c6c6"></div>
<div style="position:absolute;white-space:nowrap;left:96.90px;top:193.86px;font-size:10.8px;line-height:14px;color:#222;transform:scaleX(0.970);transform-origin:0 0;">Tooltip:</div>
<div style="position:absolute;white-space:nowrap;left:222.90px;top:193.86px;font-size:10.8px;line-height:14px;color:#222;transform:scaleX(0.970);transform-origin:0 0;">Tooltip Text:</div>
<div class="" style="position:absolute;left:149.60px;top:193.30px;width:65.90px;height:13.70px;background:#ffffdc;border:1px solid #c6c6c6"></div>
<div class="" style="position:absolute;left:293.90px;top:193.30px;width:66.20px;height:13.70px;background:#000;border:1px solid #000"></div>
<div style="position:absolute;white-space:nowrap;left:96.90px;top:211.76px;font-size:10.8px;line-height:14px;color:#222;transform:scaleX(0.970);transform-origin:0 0;">Link:</div>
<div style="position:absolute;white-space:nowrap;left:222.90px;top:211.76px;font-size:10.8px;line-height:14px;color:#222;transform:scaleX(0.970);transform-origin:0 0;">Visited Link:</div>
<div class="" style="position:absolute;left:149.60px;top:211.30px;width:65.90px;height:13.70px;background:#0000ff;border:1px solid #0000ff"></div>
<div class="" style="position:absolute;left:293.90px;top:211.30px;width:66.20px;height:13.70px;background:#ff00ff;border:1px solid #ff00ff"></div>
<div class="btn" style="position:absolute;left:97.20px;top:236.90px;width:67.70px;height:18.30px;"></div>
<div style="position:absolute;white-space:nowrap;left:102.50px;top:239.46px;font-size:10.8px;line-height:14px;color:#222;transform:scaleX(0.939);transform-origin:0 0;"><u>S</u>ave Palette</div>
<div class="btn" style="position:absolute;left:169.50px;top:236.90px;width:69.20px;height:18.30px;"></div>
<div style="position:absolute;white-space:nowrap;left:175.00px;top:239.46px;font-size:10.8px;line-height:14px;color:#222;transform:scaleX(0.956);transform-origin:0 0;"><u>L</u>oad Palette</div>
<div class="btn" style="position:absolute;left:336.00px;top:236.90px;width:80.60px;height:18.30px;"></div>
<div style="position:absolute;white-space:nowrap;left:341.50px;top:239.46px;font-size:10.8px;line-height:14px;color:#222;transform:scaleX(0.988);transform-origin:0 0;"><u>D</u>efault Palette</div>
<div style="position:absolute;white-space:nowrap;left:89.50px;top:269.76px;font-size:10.8px;line-height:14px;color:#222;">Toolbar button style:</div>
<div class="" style="position:absolute;left:191.40px;top:267.70px;width:232.80px;height:18.90px;border:1px solid #c4c4c4;background:linear-gradient(#fbfbfb,#f0f0f0);border-radius:2px"></div>
<svg style="position:absolute;left:412.20px;top:274.15px;" width="8" height="6" viewBox="0 0 8 6"><path d="M1.5 1.5H6.5L4 4.5Z" fill="#333"/></svg>
<div style="position:absolute;white-space:nowrap;left:194.50px;top:270.21px;font-size:10.8px;line-height:14px;color:#222;transform:scaleX(0.970);transform-origin:0 0;">The text appears beside the icon</div>
<div style="position:absolute;white-space:nowrap;left:89.50px;top:293.26px;font-size:10.8px;line-height:14px;color:#222;transform:scaleX(0.971);transform-origin:0 0;">Toolbar icon size:</div>
<div class="" style="position:absolute;left:191.40px;top:291.20px;width:232.80px;height:18.30px;border:1px solid #c4c4c4;background:linear-gradient(#fbfbfb,#f0f0f0);border-radius:2px"></div>
<svg style="position:absolute;left:412.20px;top:297.35px;" width="8" height="6" viewBox="0 0 8 6"><path d="M1.5 1.5H6.5L4 4.5Z" fill="#333"/></svg>
<div style="position:absolute;white-space:nowrap;left:194.50px;top:293.41px;font-size:10.8px;line-height:14px;color:#222;">24</div>
<div class="" style="position:absolute;left:431.20px;top:26.50px;width:8.30px;height:283.00px;background:#e9e9e9;border:1px solid #d8d8d8"></div>
<div class="" style="position:absolute;left:431.20px;top:36.50px;width:8.30px;height:241.50px;background:#f9f9f9;border:1px solid #d8d8d8"></div>
<svg style="position:absolute;left:431.50px;top:28.50px;" width="8" height="6" viewBox="0 0 8 6"><path d="M1.5 4.5L4 1.5L6.5 4.5Z" fill="#333"/></svg>
<svg style="position:absolute;left:431.50px;top:302.50px;" width="8" height="6" viewBox="0 0 8 6"><path d="M1.5 1.5L4 4.5L6.5 1.5Z" fill="#333"/></svg>
<div class="btn" style="position:absolute;left:10.40px;top:314.40px;width:53.40px;height:19.10px;"></div>
<svg style="position:absolute;left:17.30px;top:319.00px;" width="10" height="8" viewBox="0 0 10 8"><path d="M0.3 3.9L3 0.3H9.8V7.6H3Z" fill="#333"/><path d="M4.6 2.2L7.6 5.5M7.6 2.2L4.6 5.5" stroke="#fff" stroke-width="1.2"/></svg>
<div style="position:absolute;white-space:nowrap;left:29.60px;top:316.96px;font-size:10.8px;line-height:14px;color:#222;transform:scaleX(0.890);transform-origin:0 0;">Reset</div>
<div class="btn" style="position:absolute;left:329.60px;top:314.70px;width:52.80px;height:18.30px;"></div>
<svg style="position:absolute;left:338.00px;top:321.00px;" width="6.6" height="6.6" viewBox="0 0 6.6 6.6"><path d="M0.6 0.6L6 6M6 0.6L0.6 6" stroke="#2a2a2a" stroke-width="1.15"/></svg>
<div style="position:absolute;white-space:nowrap;left:347.90px;top:317.06px;font-size:10.8px;line-height:14px;color:#222;transform:scaleX(0.905);transform-origin:0 0;">Close</div>
<div class="" style="position:absolute;left:387.00px;top:314.70px;width:52.50px;height:18.30px;border:1px solid #d2d2d2;border-radius:3px;background:#f2f2f2"></div>
<svg style="position:absolute;left:393.00px;top:319.00px;" width="10" height="10" viewBox="0 0 10 10"><path d="M1.5 5.5L4 8L8.5 1.5" stroke="#a0a0a0" stroke-width="1.3" fill="none"/></svg>
<div style="position:absolute;white-space:nowrap;left:405.00px;top:317.26px;font-size:10.8px;line-height:14px;color:#a0a0a0;transform:scaleX(0.962);transform-origin:0 0;">Apply</div>
</div>
<div class="win" style="position:absolute;left:475.00px;top:383.00px;width:351.00px;height:307.00px;">
<div class="" style="position:absolute;left:0.00px;top:0.00px;width:351.00px;height:1.00px;background:#fbfbfb"></div>
<div class="" style="position:absolute;left:0.00px;top:1.00px;width:351.00px;height:20.00px;background:linear-gradient(#eceef0,#efefef)"></div>
<svg style="position:absolute;left:5.00px;top:4.00px;" width="12.5" height="12.5" viewBox="0 0 12.5 12.5"><circle cx="6.25" cy="6.25" r="5.3" fill="#fff" stroke="#f39c1f" stroke-width="1.6"/><path d="M6.25 6.25L9 3.5M6.25 6.25L3.5 8" stroke="#333" stroke-width="0.8"/></svg>
<div style="position:absolute;white-space:nowrap;left:111.30px;top:3.88px;font-size:9px;line-height:12px;color:#a3a3a3;font-weight:bold;transform:scaleX(0.936);transform-origin:0 0;">Time and date configuration</div>
<svg style="position:absolute;left:319.60px;top:5.00px;" width="10" height="10" viewBox="0 0 10 10"><path d="M1.5 2.2H8.5M1.5 7.8L5 4.3L8.5 7.8" stroke="#b4b4b4" stroke-width="1" fill="none"/></svg>
<svg style="position:absolute;left:333.40px;top:3.50px;" width="13" height="13" viewBox="0 0 13 13"><circle cx="6.5" cy="6.5" r="6.2" fill="#c4c4c4"/><path d="M3.8 3.8L9.2 9.2M9.2 3.8L3.8 9.2" stroke="#eeeeee" stroke-width="1.3"/></svg>
<div class="" style="position:absolute;left:10.50px;top:26.40px;width:73.90px;height:246.00px;border:1px solid #c9c9c9;background:#fff;border-radius:2px"></div>
<svg style="position:absolute;left:37.30px;top:30.00px;" width="20" height="20" viewBox="0 0 20 20"><g transform="translate(10,10) rotate(12)"><circle r="6.72" fill="#3e5a6e"/><rect x="-2.88" y="-9.60" width="5.76" height="5.28" rx="1.92" fill="#3e5a6e" transform="rotate(0)"/><rect x="-2.88" y="-9.60" width="5.76" height="5.28" rx="1.92" fill="#3e5a6e" transform="rotate(60)"/><rect x="-2.88" y="-9.60" width="5.76" height="5.28" rx="1.92" fill="#3e5a6e" transform="rotate(120)"/><rect x="-2.88" y="-9.60" width="5.76" height="5.28" rx="1.92" fill="#3e5a6e" transform="rotate(180)"/><rect x="-2.88" y="-9.60" width="5.76" height="5.28" rx="1.92" fill="#3e5a6e" transform="rotate(240)"/><rect x="-2.88" y="-9.60" width="5.76" height="5.28" rx="1.92" fill="#3e5a6e" transform="rotate(300)"/><circle r="3.46" fill="#b4cde6"/></g></svg>
<div class="" style="position:absolute;left:12.20px;top:52.30px;width:71.10px;height:15.40px;background:#3584e2"></div>
<div style="position:absolute;white-space:nowrap;left:13.98px;top:53.36px;font-size:10.8px;line-height:14px;color:#fff;transform:scaleX(0.986);transform-origin:50% 0;">Date and time</div>
<svg style="position:absolute;left:37.30px;top:70.80px;" width="20" height="20" viewBox="0 0 20 20"><g transform="translate(10,10) rotate(12)"><circle r="6.72" fill="#3e5a6e"/><rect x="-2.88" y="-9.60" width="5.76" height="5.28" rx="1.92" fill="#3e5a6e" transform="rotate(0)"/><rect x="-2.88" y="-9.60" width="5.76" height="5.28" rx="1.92" fill="#3e5a6e" transform="rotate(60)"/><rect x="-2.88" y="-9.60" width="5.76" height="5.28" rx="1.92" fill="#3e5a6e" transform="rotate(120)"/><rect x="-2.88" y="-9.60" width="5.76" height="5.28" rx="1.92" fill="#3e5a6e" transform="rotate(180)"/><rect x="-2.88" y="-9.60" width="5.76" height="5.28" rx="1.92" fill="#3e5a6e" transform="rotate(240)"/><rect x="-2.88" y="-9.60" width="5.76" height="5.28" rx="1.92" fill="#3e5a6e" transform="rotate(300)"/><circle r="3.46" fill="#fff"/></g></svg>
<div style="position:absolute;white-space:nowrap;left:24.09px;top:93.96px;font-size:10.8px;line-height:14px;color:#222;transform:scaleX(0.968);transform-origin:50% 0;">Timezone</div>
<div style="position:absolute;white-space:nowrap;left:89.50px;top:26.76px;font-size:10.8px;line-height:14px;color:#222;transform:scaleX(0.970);transform-origin:0 0;">Time:</div>
<div class="" style="position:absolute;left:89.50px;top:45.50px;width:251.00px;height:17.90px;border:1px solid #c4c4c4;background:#fff;border-radius:2px"></div>
<svg style="position:absolute;left:330.00px;top:47.50px;" width="9" height="14" viewBox="0 0 9 14"><path d="M0.5 0V14" stroke="#ddd"/><path d="M2.5 5.5L4.7 2.5L6.9 5.5Z" fill="#444"/><path d="M2.5 8.5L4.7 11.5L6.9 8.5Z" fill="#444"/></svg>
<div style="position:absolute;white-space:nowrap;left:93.00px;top:47.86px;font-size:10.8px;line-height:14px;color:#222;transform:scaleX(0.970);transform-origin:0 0;">12:35:43</div>
<div style="position:absolute;white-space:nowrap;left:89.50px;top:68.06px;font-size:10.8px;line-height:14px;color:#222;transform:scaleX(0.970);transform-origin:0 0;">Date:</div>
<div class="" style="position:absolute;left:89.00px;top:86.20px;width:251.50px;height:18.30px;background:#3d8be0"></div>
<svg style="position:absolute;left:91.00px;top:90.00px;" width="12" height="10" viewBox="0 0 12 10"><path d="M11 5H2M5.5 1.5L2 5L5.5 8.5" stroke="#2a3a4a" stroke-width="1.4" fill="none"/></svg>
<svg style="position:absolute;left:326.00px;top:90.00px;" width="12" height="10" viewBox="0 0 12 10"><path d="M1 5H10M6.5 1.5L10 5L6.5 8.5" stroke="#2a3a4a" stroke-width="1.4" fill="none"/></svg>
<div style="position:absolute;white-space:nowrap;left:187.60px;top:88.56px;font-size:10.8px;line-height:14px;color:#fff;font-weight:bold;transform:scaleX(0.980);transform-origin:0 0;">May</div>
<svg style="position:absolute;left:208.00px;top:99.50px;" width="5" height="4" viewBox="0 0 5 4"><path d="M0.5 1L2.5 3L4.5 1Z" fill="#27425f"/></svg>
<div style="position:absolute;white-space:nowrap;left:219.80px;top:88.56px;font-size:10.8px;line-height:14px;color:#fff;font-weight:bold;transform:scaleX(0.941);transform-origin:0 0;">2025</div>
<div class="" style="position:absolute;left:89.00px;top:104.50px;width:251.50px;height:97.10px;background:#f7f7f7"></div>
<div class="" style="position:absolute;left:121.10px;top:120.80px;width:219.40px;height:80.80px;background:#fff"></div>
<div style="position:absolute;white-space:nowrap;left:126.29px;top:106.46px;font-size:10.8px;line-height:14px;color:#e02424;">Sun</div>
<div style="position:absolute;white-space:nowrap;left:156.99px;top:106.46px;font-size:10.8px;line-height:14px;color:#222;">Mon</div>
<div style="position:absolute;white-space:nowrap;left:190.10px;top:106.46px;font-size:10.8px;line-height:14px;color:#222;">Tue</div>
<div style="position:absolute;white-space:nowrap;left:219.19px;top:106.46px;font-size:10.8px;line-height:14px;color:#222;">Wed</div>
<div style="position:absolute;white-space:nowrap;left:252.09px;top:106.46px;font-size:10.8px;line-height:14px;color:#222;">Thu</div>
<div style="position:absolute;white-space:nowrap;left:286.70px;top:106.46px;font-size:10.8px;line-height:14px;color:#222;">Fri</div>
<div style="position:absolute;white-space:nowrap;left:316.59px;top:106.46px;font-size:10.8px;line-height:14px;color:#e02424;">Sat</div>
<div class="" style="position:absolute;left:151.90px;top:171.40px;width:31.10px;height:16.70px;background:#3584e2"></div>
<div style="position:absolute;white-space:nowrap;left:98.89px;top:122.56px;font-size:10.8px;line-height:14px;color:#222;">18</div>
<div style="position:absolute;white-space:nowrap;left:129.89px;top:122.56px;font-size:10.8px;line-height:14px;color:#8a8a8a;">27</div>
<div style="position:absolute;white-space:nowrap;left:161.49px;top:122.56px;font-size:10.8px;line-height:14px;color:#8a8a8a;">28</div>
<div style="position:absolute;white-space:nowrap;left:193.19px;top:122.56px;font-size:10.8px;line-height:14px;color:#8a8a8a;">29</div>
<div style="position:absolute;white-space:nowrap;left:224.19px;top:122.56px;font-size:10.8px;line-height:14px;color:#8a8a8a;">30</div>
<div style="position:absolute;white-space:nowrap;left:258.40px;top:122.56px;font-size:10.8px;line-height:14px;color:#222;">1</div>
<div style="position:absolute;white-space:nowrap;left:290.00px;top:122.56px;font-size:10.8px;line-height:14px;color:#222;">2</div>
<div style="position:absolute;white-space:nowrap;left:321.70px;top:122.56px;font-size:10.8px;line-height:14px;color:#e02424;">3</div>
<div style="position:absolute;white-space:nowrap;left:98.89px;top:139.21px;font-size:10.8px;line-height:14px;color:#222;">19</div>
<div style="position:absolute;white-space:nowrap;left:132.90px;top:139.21px;font-size:10.8px;line-height:14px;color:#e02424;">4</div>
<div style="position:absolute;white-space:nowrap;left:164.50px;top:139.21px;font-size:10.8px;line-height:14px;color:#222;">5</div>
<div style="position:absolute;white-space:nowrap;left:196.20px;top:139.21px;font-size:10.8px;line-height:14px;color:#222;">6</div>
<div style="position:absolute;white-space:nowrap;left:227.20px;top:139.21px;font-size:10.8px;line-height:14px;color:#222;">7</div>
<div style="position:absolute;white-space:nowrap;left:258.40px;top:139.21px;font-size:10.8px;line-height:14px;color:#222;">8</div>
<div style="position:absolute;white-space:nowrap;left:290.00px;top:139.21px;font-size:10.8px;line-height:14px;color:#222;">9</div>
<div style="position:absolute;white-space:nowrap;left:318.69px;top:139.21px;font-size:10.8px;line-height:14px;color:#e02424;">10</div>
<div style="position:absolute;white-space:nowrap;left:98.89px;top:155.86px;font-size:10.8px;line-height:14px;color:#222;">20</div>
<div style="position:absolute;white-space:nowrap;left:130.29px;top:155.86px;font-size:10.8px;line-height:14px;color:#e02424;">11</div>
<div style="position:absolute;white-space:nowrap;left:161.49px;top:155.86px;font-size:10.8px;line-height:14px;color:#222;">12</div>
<div style="position:absolute;white-space:nowrap;left:193.19px;top:155.86px;font-size:10.8px;line-height:14px;color:#222;">13</div>
<div style="position:absolute;white-space:nowrap;left:224.19px;top:155.86px;font-size:10.8px;line-height:14px;color:#222;">14</div>
<div style="position:absolute;white-space:nowrap;left:255.39px;top:155.86px;font-size:10.8px;line-height:14px;color:#222;">15</div>
<div style="position:absolute;white-space:nowrap;left:286.99px;top:155.86px;font-size:10.8px;line-height:14px;color:#222;">16</div>
<div style="position:absolute;white-space:nowrap;left:318.69px;top:155.86px;font-size:10.8px;line-height:14px;color:#e02424;">17</div>
<div style="position:absolute;white-space:nowrap;left:98.89px;top:172.51px;font-size:10.8px;line-height:14px;color:#222;">21</div>
<div style="position:absolute;white-space:nowrap;left:129.89px;top:172.51px;font-size:10.8px;line-height:14px;color:#e02424;">18</div>
<div style="position:absolute;white-space:nowrap;left:161.49px;top:172.51px;font-size:10.8px;line-height:14px;color:#fff;">19</div>
<div style="position:absolute;white-space:nowrap;left:193.19px;top:172.51px;font-size:10.8px;line-height:14px;color:#222;">20</div>
<div style="position:absolute;white-space:nowrap;left:224.19px;top:172.51px;font-size:10.8px;line-height:14px;color:#222;">21</div>
<div style="position:absolute;white-space:nowrap;left:255.39px;top:172.51px;font-size:10.8px;line-height:14px;color:#222;">22</div>
<div style="position:absolute;white-space:nowrap;left:286.99px;top:172.51px;font-size:10.8px;line-height:14px;color:#222;">23</div>
<div style="position:absolute;white-space:nowrap;left:318.69px;top:172.51px;font-size:10.8px;line-height:14px;color:#e02424;">24</div>
<div style="position:absolute;white-space:nowrap;left:98.89px;top:189.16px;font-size:10.8px;line-height:14px;color:#222;">22</div>
<div style="position:absolute;white-space:nowrap;left:129.89px;top:189.16px;font-size:10.8px;line-height:14px;color:#e02424;">25</div>
<div style="position:absolute;white-space:nowrap;left:161.49px;top:189.16px;font-size:10.8px;line-height:14px;color:#222;">26</div>
<div style="position:absolute;white-space:nowrap;left:193.19px;top:189.16px;font-size:10.8px;line-height:14px;color:#222;">27</div>
<div style="position:absolute;white-space:nowrap;left:224.19px;top:189.16px;font-size:10.8px;line-height:14px;color:#222;">28</div>
<div style="position:absolute;white-space:nowrap;left:255.39px;top:189.16px;font-size:10.8px;line-height:14px;color:#222;">29</div>
<div style="position:absolute;white-space:nowrap;left:286.99px;top:189.16px;font-size:10.8px;line-height:14px;color:#222;">30</div>
<div style="position:absolute;white-space:nowrap;left:318.69px;top:189.16px;font-size:10.8px;line-height:14px;color:#e02424;">31</div>
<div class="" style="position:absolute;left:89.50px;top:210.50px;width:9.50px;height:9.50px;border:1px solid #bdbdbd;background:#fff;border-radius:1.5px"></div>
<div style="position:absolute;white-space:nowrap;left:101.90px;top:207.56px;font-size:10.8px;line-height:14px;color:#222;transform:scaleX(0.973);transform-origin:0 0;">Enable network time synchronization (NTP)</div>
<div class="" style="position:absolute;left:89.50px;top:232.80px;width:9.50px;height:9.50px;border:1px solid #bdbdbd;background:#fff;border-radius:1.5px"></div>
<div style="position:absolute;white-space:nowrap;left:101.90px;top:229.66px;font-size:10.8px;line-height:14px;color:#222;transform:scaleX(0.937);transform-origin:0 0;">RTC is in local time</div>
<div class="" style="position:absolute;left:229.40px;top:277.00px;width:52.80px;height:18.40px;border:1px solid #8fb6e0;border-radius:3px;background:linear-gradient(#f4f8fc,#e3ecf5)"></div>
<svg style="position:absolute;left:241.00px;top:281.00px;" width="10" height="10" viewBox="0 0 10 10"><path d="M1.5 5.5L4 8L8.5 1.5" stroke="#222" stroke-width="1.3" fill="none"/></svg>
<div style="position:absolute;white-space:nowrap;left:254.00px;top:279.26px;font-size:10.8px;line-height:14px;color:#222;">OK</div>
<div class="btn" style="position:absolute;left:287.20px;top:276.40px;width:52.80px;height:18.90px;"></div>
<svg style="position:absolute;left:293.30px;top:283.30px;" width="6.6" height="6.6" viewBox="0 0 6.6 6.6"><path d="M0.6 0.6L6 6M6 0.6L0.6 6" stroke="#2a2a2a" stroke-width="1.15"/></svg>
<div style="position:absolute;white-space:nowrap;left:303.30px;top:278.96px;font-size:10.8px;line-height:14px;color:#222;transform:scaleX(0.922);transform-origin:0 0;">Cancel</div>
</div>
<div class="win" style="position:absolute;left:854.00px;top:449.00px;width:318.00px;height:238.00px;">
<div class="" style="position:absolute;left:0.00px;top:0.00px;width:318.00px;height:19.00px;background:linear-gradient(#5a5f64,#474c51)"></div>
<div class="" style="position:absolute;left:0.00px;top:18.30px;width:318.00px;height:1.20px;background:#cfe6f7"></div>
<svg style="position:absolute;left:4.50px;top:4.00px;" width="12" height="12" viewBox="0 0 12 12"><circle cx="6.5" cy="6" r="3.2" fill="#ddd"/><path d="M6.5 2.8A3.2 3.2 0 0 0 6.5 9.2Z" fill="#777"/><circle cx="11.00" cy="6.00" r="0.6" fill="#bbb"/><circle cx="9.54" cy="9.53" r="0.6" fill="#bbb"/><circle cx="6.00" cy="11.00" r="0.6" fill="#bbb"/><circle cx="2.47" cy="9.54" r="0.6" fill="#bbb"/><circle cx="1.00" cy="6.01" r="0.6" fill="#bbb"/><circle cx="2.46" cy="2.47" r="0.6" fill="#bbb"/><circle cx="5.99" cy="1.00" r="0.6" fill="#bbb"/><circle cx="9.53" cy="2.45" r="0.6" fill="#bbb"/></svg>
<div style="position:absolute;white-space:nowrap;left:112.30px;top:4.18px;font-size:9px;line-height:12px;color:#d4d6d8;font-weight:bold;transform:scaleX(0.929);transform-origin:0 0;">Brightness Settings</div>
<svg style="position:absolute;left:287.30px;top:5.00px;" width="10" height="10" viewBox="0 0 10 10"><path d="M1.5 2.2H8.5M1.5 7.8L5 4.3L8.5 7.8" stroke="#e6e6e6" stroke-width="1" fill="none"/></svg>
<svg style="position:absolute;left:300.20px;top:3.50px;" width="13" height="13" viewBox="0 0 13 13"><circle cx="6.5" cy="6.5" r="6.2" fill="#f2f2f2"/><path d="M3.8 3.8L9.2 9.2M9.2 3.8L3.8 9.2" stroke="#4a4f54" stroke-width="1.3"/></svg>
<svg style="position:absolute;left:12.00px;top:28.00px;" width="19.5" height="19.5" viewBox="0 0 19.5 19.5"><g transform="translate(9.75,9.75)"><rect x="-6.6" y="-6.6" width="13.2" height="13.2" fill="#111"/><rect x="-6.6" y="-6.6" width="13.2" height="13.2" fill="#111" transform="rotate(45)"/><circle r="5.2" fill="#fff"/><circle r="4" fill="none" stroke="#111" stroke-width="1"/><path d="M0 -4A4 4 0 0 0 0 4Z" fill="#111"/></g></svg>
<div style="position:absolute;white-space:nowrap;left:39.40px;top:30.26px;font-size:10.8px;line-height:14px;color:#111;font-weight:bold;transform:scaleX(0.941);transform-origin:0 0;">Backlight and brightness settings:</div>
<div style="position:absolute;white-space:nowrap;left:11.30px;top:53.06px;font-size:10.8px;line-height:14px;color:#8e8e8e;transform:scaleX(0.970);transform-origin:0 0;">Backlight</div>
<div class="" style="position:absolute;left:11.30px;top:67.60px;width:295.70px;height:34.10px;border:1px solid #e0e0e0;background:#ececec;border-radius:2px"></div>
<svg style="position:absolute;left:22.80px;top:79.60px;" width="12" height="12" viewBox="0 0 12 12"><circle cx="6" cy="6" r="1.8" fill="#bdbdbd"/><path d="M8.80 6.00L10.40 6.00" stroke="#bdbdbd" stroke-width="0.9"/><path d="M7.98 7.98L9.11 9.11" stroke="#bdbdbd" stroke-width="0.9"/><path d="M6.00 8.80L6.00 10.40" stroke="#bdbdbd" stroke-width="0.9"/><path d="M4.02 7.98L2.89 9.11" stroke="#bdbdbd" stroke-width="0.9"/><path d="M3.20 6.00L1.60 6.00" stroke="#bdbdbd" stroke-width="0.9"/><path d="M4.02 4.02L2.89 2.89" stroke="#bdbdbd" stroke-width="0.9"/><path d="M6.00 3.20L6.00 1.60" stroke="#bdbdbd" stroke-width="0.9"/><path d="M7.98 4.02L9.11 2.89" stroke="#bdbdbd" stroke-width="0.9"/></svg>
<div class="" style="position:absolute;left:46.00px;top:83.50px;width:228.60px;height:3.30px;background:#d9d9d9;border-radius:1.5px;border:1px solid #bcbcbc"></div>
<div class="" style="position:absolute;left:43.30px;top:80.90px;width:9.60px;height:8.50px;background:#fafafa;border:1px solid #c2c2c2;border-radius:2px"></div>
<svg style="position:absolute;left:283.70px;top:79.60px;" width="12" height="12" viewBox="0 0 12 12"><circle cx="6" cy="6" r="1.8" fill="#555"/><path d="M8.80 6.00L10.40 6.00" stroke="#555" stroke-width="0.9"/><path d="M7.98 7.98L9.11 9.11" stroke="#555" stroke-width="0.9"/><path d="M6.00 8.80L6.00 10.40" stroke="#555" stroke-width="0.9"/><path d="M4.02 7.98L2.89 9.11" stroke="#555" stroke-width="0.9"/><path d="M3.20 6.00L1.60 6.00" stroke="#555" stroke-width="0.9"/><path d="M4.02 4.02L2.89 2.89" stroke="#555" stroke-width="0.9"/><path d="M6.00 3.20L6.00 1.60" stroke="#555" stroke-width="0.9"/><path d="M7.98 4.02L9.11 2.89" stroke="#555" stroke-width="0.9"/></svg>
<div style="position:absolute;white-space:nowrap;left:11.30px;top:106.76px;font-size:10.8px;line-height:14px;color:#222;transform:scaleX(0.970);transform-origin:0 0;">Brightness</div>
<div class="" style="position:absolute;left:11.30px;top:121.50px;width:295.70px;height:59.90px;border:1px solid #e0e0e0;background:#ececec;border-radius:2px"></div>
<div class="" style="position:absolute;left:20.40px;top:136.00px;width:277.60px;height:31.70px;border:1px solid #c9c9c9;background:#efefef;border-radius:1px"></div>
<div style="position:absolute;white-space:nowrap;left:26.80px;top:144.36px;font-size:10.8px;line-height:14px;color:#111;font-weight:bold;transform:scaleX(0.983);transform-origin:0 0;">Virtual-1:</div>
<svg style="position:absolute;left:80.70px;top:146.20px;" width="12" height="12" viewBox="0 0 12 12"><circle cx="6" cy="6" r="1.8" fill="#444"/><path d="M8.80 6.00L10.40 6.00" stroke="#444" stroke-width="0.9"/><path d="M7.98 7.98L9.11 9.11" stroke="#444" stroke-width="0.9"/><path d="M6.00 8.80L6.00 10.40" stroke="#444" stroke-width="0.9"/><path d="M4.02 7.98L2.89 9.11" stroke="#444" stroke-width="0.9"/><path d="M3.20 6.00L1.60 6.00" stroke="#444" stroke-width="0.9"/><path d="M4.02 4.02L2.89 2.89" stroke="#444" stroke-width="0.9"/><path d="M6.00 3.20L6.00 1.60" stroke="#444" stroke-width="0.9"/><path d="M7.98 4.02L9.11 2.89" stroke="#444" stroke-width="0.9"/></svg>
<div class="" style="position:absolute;left:101.50px;top:147.00px;width:165.20px;height:3.50px;background:#d9d9d9;border:1px solid #c4c4c4;border-radius:2px"></div>
<div class="" style="position:absolute;left:101.50px;top:147.00px;width:82.00px;height:3.50px;background:#3d8be0;border:1px solid #2f77c8;border-radius:2px"></div>
<div class="" style="position:absolute;left:179.70px;top:145.30px;width:8.00px;height:8.20px;background:#fafafa;border:1px solid #b8b8b8;border-radius:2px"></div>
<div class="" style="position:absolute;left:105.40px;top:155.50px;width:1.00px;height:2.00px;background:#b8b8b8"></div>
<div class="" style="position:absolute;left:184.00px;top:155.50px;width:1.00px;height:2.00px;background:#b8b8b8"></div>
<div class="" style="position:absolute;left:262.30px;top:155.50px;width:1.00px;height:2.00px;background:#b8b8b8"></div>
<svg style="position:absolute;left:275.40px;top:146.00px;" width="12" height="12" viewBox="0 0 12 12"><circle cx="6" cy="6" r="2.1" fill="#111"/><path d="M9.10 6.00L10.70 6.00" stroke="#111" stroke-width="0.9"/><path d="M8.19 8.19L9.32 9.32" stroke="#111" stroke-width="0.9"/><path d="M6.00 9.10L6.00 10.70" stroke="#111" stroke-width="0.9"/><path d="M3.81 8.19L2.68 9.32" stroke="#111" stroke-width="0.9"/><path d="M2.90 6.00L1.30 6.00" stroke="#111" stroke-width="0.9"/><path d="M3.81 3.81L2.68 2.68" stroke="#111" stroke-width="0.9"/><path d="M6.00 2.90L6.00 1.30" stroke="#111" stroke-width="0.9"/><path d="M8.19 3.81L9.32 2.68" stroke="#111" stroke-width="0.9"/></svg>
<div class="" style="position:absolute;left:11.30px;top:190.50px;width:9.50px;height:9.50px;border:1px solid #bdbdbd;background:#fff;border-radius:1.5px"></div>
<svg style="position:absolute;left:11.30px;top:190.50px;" width="10" height="10" viewBox="0 0 10 10"><path d="M2 5L4.2 7.5L8.3 2" stroke="#111" stroke-width="1.5" fill="none"/></svg>
<div style="position:absolute;white-space:nowrap;left:24.00px;top:188.26px;font-size:10.8px;line-height:14px;color:#222;transform:scaleX(0.990);transform-origin:0 0;">Require confirmation after settings change</div>
<div class="" style="position:absolute;left:11.00px;top:208.10px;width:53.40px;height:18.70px;border:1px solid #8fb6e0;border-radius:3px;background:linear-gradient(#f4f8fc,#e3ecf5)"></div>
<svg style="position:absolute;left:18.20px;top:213.60px;" width="10" height="8" viewBox="0 0 10 8"><path d="M0.3 3.9L3 0.3H9.8V7.6H3Z" fill="#333"/><path d="M4.6 2.2L7.6 5.5M7.6 2.2L4.6 5.5" stroke="#fff" stroke-width="1.2"/></svg>
<div style="position:absolute;white-space:nowrap;left:29.40px;top:210.76px;font-size:10.8px;line-height:14px;color:#222;transform:scaleX(0.918);transform-origin:0 0;">Reset</div>
<div class="btn" style="position:absolute;left:254.40px;top:208.00px;width:52.60px;height:19.00px;"></div>
<svg style="position:absolute;left:263.00px;top:215.50px;" width="6.6" height="6.6" viewBox="0 0 6.6 6.6"><path d="M0.6 0.6L6 6M6 0.6L0.6 6" stroke="#2a2a2a" stroke-width="1.15"/></svg>
<div style="position:absolute;white-space:nowrap;left:272.80px;top:211.06px;font-size:10.8px;line-height:14px;color:#222;transform:scaleX(0.913);transform-origin:0 0;">Close</div>
</div>
<svg style="position:absolute;left:1145.00px;top:630.00px;" width="44" height="40" viewBox="0 0 44 40"><defs><radialGradient id="lg" cx="0.5" cy="0.45" r="0.55"><stop offset="0" stop-color="#ffffff"/><stop offset="0.85" stop-color="#f4f4f6"/><stop offset="1" stop-color="#dfe3ea"/></radialGradient></defs><ellipse cx="22" cy="19.8" rx="18.7" ry="18.2" fill="url(#lg)"/><path d="M29.5 6C27 3.8 21 4 18 7.5L17 12C14 18 13 24 12.5 28.5C11 29.5 9 30 7.3 30.8L14 31L19.5 29.8C17.5 26 17.5 18 19.5 12C21 9 24 8 29.5 6Z" fill="#4a4872"/><path d="M17.5 10.8L7.5 13.6L8 14.6L17 12.8Z" fill="#8d8f7c"/><path d="M25 22L22.3 27.6L23.4 28.2L26.2 23Z" fill="#4d4d55"/><path d="M19.5 30.6L27.5 32" stroke="#9a9aa0" stroke-width="1.2"/></svg>
<div style="position:absolute;white-space:nowrap;left:1189.20px;top:632.09px;font-size:13.6px;line-height:18px;color:#fff;font-weight:bold;transform:scaleX(1.070);transform-origin:0 0;text-shadow:1px 1px 0 #102038,-1px -1px 0 #102038,1px -1px 0 #102038,-1px 1px 0 #102038,0 0 2px #102038;letter-spacing:0.3px;-webkit-text-stroke:0.5px #fff">Linux</div>
<div style="position:absolute;white-space:nowrap;left:1189.20px;top:648.49px;font-size:13.6px;line-height:18px;color:#fff;font-weight:bold;transform:scaleX(1.107);transform-origin:0 0;text-shadow:1px 1px 0 #102038,-1px -1px 0 #102038,1px -1px 0 #102038,-1px 1px 0 #102038,0 0 2px #102038;-webkit-text-stroke:0.5px #fff">Compatible</div>
<div class="" style="position:absolute;left:0.00px;top:703.00px;width:1280.00px;height:18.00px;background:#0e171e"></div>
<svg style="position:absolute;left:0.50px;top:705.00px;" width="15" height="15" viewBox="0 0 15 15"><path d="M2 4C3.5 3 5 3.5 6 5C7 3 9 1.5 12 1.5L10 3.5C11 5 11 7.5 9.5 9C8 10.5 5.5 10.5 4 9.5M2 4C1.5 7 2.5 10 5 12.5C7 14 10 14 12.5 12.5M4 8.5C5.5 9.5 7 9 8 7.5" stroke="#e6e6e6" stroke-width="1.2" fill="none"/></svg>
<svg style="position:absolute;left:20.00px;top:708.00px;" width="14" height="12" viewBox="0 0 14 12"><rect x="0" y="0" width="14" height="11.5" fill="#4a8fe0"/><rect x="2" y="10.5" width="10" height="1.5" fill="#2a5fa8"/></svg>
<div class="" style="position:absolute;left:37.00px;top:703.00px;width:13.00px;height:18.00px;background:#6a0f12"></div>
<div style="position:absolute;white-space:nowrap;left:40.50px;top:706.66px;font-size:10.8px;line-height:14px;color:#fff;">1</div>
<div style="position:absolute;white-space:nowrap;left:55.00px;top:706.66px;font-size:10.8px;line-height:14px;color:#d5dbe0;">2</div>
<svg style="position:absolute;left:68.70px;top:707.00px;" width="13.5" height="13.5" viewBox="0 0 13.5 13.5"><rect x="0" y="4" width="13.5" height="9.5" fill="#8e8e8e"/><rect x="0.5" y="0" width="12.5" height="2.6" fill="#9ccc70"/><rect x="0.5" y="2.6" width="12.5" height="1.4" fill="#d9a550"/><rect x="4.5" y="7" width="4.5" height="1.3" fill="#e6e6e6"/></svg>
<svg style="position:absolute;left:89.50px;top:707.50px;" width="13" height="12.5" viewBox="0 0 13 12.5"><rect x="0" y="0" width="13" height="12.5" rx="1" fill="#3c4043"/><path d="M2.5 3L5 5L2.5 7M6 8H10" stroke="#eee" stroke-width="1" fill="none"/></svg>
<svg style="position:absolute;left:110.00px;top:707.00px;" width="14" height="14" viewBox="0 0 14 14"><rect x="0" y="0" width="14" height="14" fill="#d6dbe0"/><path d="M3 12C4 8 7 4 12.5 2.5C11 6 8 9 3.5 11.5Z" fill="#4a6fa8"/></svg>
<svg style="position:absolute;left:132.50px;top:706.50px;" width="14" height="14" viewBox="0 0 14 14"><rect x="0" y="0" width="14" height="14" rx="3.5" fill="#eef2f6"/><rect x="3" y="5" width="1.6" height="6" fill="#3a7bd5"/><rect x="6.5" y="3" width="1.2" height="8" fill="#8aaed8"/><rect x="9.5" y="6" width="1.6" height="5" fill="#3a7bd5"/></svg>
<div style="position:absolute;white-space:nowrap;left:148.80px;top:706.66px;font-size:10.8px;line-height:14px;color:#d5dbe0;transform:scaleX(0.985);transform-origin:0 0;">Configuration Center</div>
<svg style="position:absolute;left:266.20px;top:707.00px;" width="13" height="13" viewBox="0 0 13 13"><g transform="translate(6.5,6.5) rotate(12)"><circle r="4.41" fill="#c5c9cd"/><rect x="-1.89" y="-6.30" width="3.78" height="3.47" rx="1.26" fill="#c5c9cd" transform="rotate(0)"/><rect x="-1.89" y="-6.30" width="3.78" height="3.47" rx="1.26" fill="#c5c9cd" transform="rotate(60)"/><rect x="-1.89" y="-6.30" width="3.78" height="3.47" rx="1.26" fill="#c5c9cd" transform="rotate(120)"/><rect x="-1.89" y="-6.30" width="3.78" height="3.47" rx="1.26" fill="#c5c9cd" transform="rotate(180)"/><rect x="-1.89" y="-6.30" width="3.78" height="3.47" rx="1.26" fill="#c5c9cd" transform="rotate(240)"/><rect x="-1.89" y="-6.30" width="3.78" height="3.47" rx="1.26" fill="#c5c9cd" transform="rotate(300)"/><circle r="2.27" fill="#f2f2f2"/></g></svg>
<div style="position:absolute;white-space:nowrap;left:282.50px;top:706.66px;font-size:10.8px;line-height:14px;color:#d5dbe0;transform:scaleX(0.949);transform-origin:0 0;">File Associations</div>
<svg style="position:absolute;left:400.50px;top:707.00px;" width="12.5" height="12.5" viewBox="0 0 12.5 12.5"><rect x="0" y="0" width="12.5" height="12.5" rx="1.5" fill="#2d7fd9"/><rect x="3" y="4" width="7" height="4" fill="#fff"/><path d="M1.8 1.5V11" stroke="#cfe3fa" stroke-dasharray="1 1"/></svg>
<div style="position:absolute;white-space:nowrap;left:415.50px;top:706.66px;font-size:10.8px;line-height:14px;color:#d5dbe0;transform:scaleX(0.936);transform-origin:0 0;">LXQt Appearance Co...</div>
<div class="" style="position:absolute;left:530.00px;top:703.00px;width:131.30px;height:2.00px;background:#c7302c"></div>
<svg style="position:absolute;left:533.00px;top:707.00px;" width="12" height="13" viewBox="0 0 12 13"><circle cx="7" cy="6.5" r="3.3" fill="#ddd"/><path d="M7 3.2A3.3 3.3 0 0 0 7 9.8Z" fill="#888"/><circle cx="11.50" cy="6.50" r="0.7" fill="#ccc"/><circle cx="10.04" cy="10.03" r="0.7" fill="#ccc"/><circle cx="6.50" cy="11.50" r="0.7" fill="#ccc"/><circle cx="2.97" cy="10.04" r="0.7" fill="#ccc"/><circle cx="1.50" cy="6.51" r="0.7" fill="#ccc"/><circle cx="2.96" cy="2.97" r="0.7" fill="#ccc"/><circle cx="6.49" cy="1.50" r="0.7" fill="#ccc"/><circle cx="10.03" cy="2.95" r="0.7" fill="#ccc"/></svg>
<div style="position:absolute;white-space:nowrap;left:548.30px;top:706.66px;font-size:10.8px;line-height:14px;color:#d5dbe0;transform:scaleX(0.973);transform-origin:0 0;">Brightness Settings</div>
<svg style="position:absolute;left:667.50px;top:706.50px;" width="13.5" height="13.5" viewBox="0 0 13.5 13.5"><circle cx="6.75" cy="6.75" r="5.8" fill="#fff" stroke="#f0a22a" stroke-width="1.7"/><path d="M6.75 6.75L9.5 3.8M6.75 6.75L3.8 8.8" stroke="#333" stroke-width="0.9"/></svg>
<div style="position:absolute;white-space:nowrap;left:683.00px;top:706.66px;font-size:10.8px;line-height:14px;color:#d5dbe0;transform:scaleX(0.973);transform-origin:0 0;">Time and date config...</div>
<svg style="position:absolute;left:800.50px;top:707.00px;" width="11" height="13" viewBox="0 0 11 13"><rect x="0" y="0" width="11" height="13" rx="1" fill="#c8c8c8"/><rect x="0" y="0" width="11" height="3.5" fill="#dccf86"/><rect x="3.5" y="7.5" width="4" height="1.3" fill="#666"/></svg>
<div style="position:absolute;white-space:nowrap;left:813.00px;top:706.66px;font-size:10.8px;line-height:14px;color:#d5dbe0;transform:scaleX(0.957);transform-origin:0 0;">Desktop Preferences</div>
<div style="position:absolute;white-space:nowrap;left:1067.87px;top:708.11px;font-size:9.5px;line-height:12px;color:#d5dbe0;">C</div>
<div style="position:absolute;white-space:nowrap;left:1078.87px;top:708.11px;font-size:9.5px;line-height:12px;color:#d5dbe0;">N</div>
<div style="position:absolute;white-space:nowrap;left:1091.23px;top:708.11px;font-size:9.5px;line-height:12px;color:#d5dbe0;">S</div>
<div style="position:absolute;white-space:nowrap;left:1101.10px;top:706.66px;font-size:10.8px;line-height:14px;color:#d5dbe0;transform:scaleX(0.833);transform-origin:50% 0;">US</div>
<div style="position:absolute;white-space:nowrap;left:1121.60px;top:705.27px;font-size:12.5px;line-height:16px;color:#3f8fdc;font-weight:bold;transform:scaleX(0.806);transform-origin:0 0;">EN</div>
<svg style="position:absolute;left:1139.40px;top:707.00px;" width="14" height="13" viewBox="0 0 14 13"><rect x="0.7" y="0.7" width="12.6" height="10.5" fill="none" stroke="#bfc4c8" stroke-width="1.4"/><rect x="4" y="3" width="6" height="4" fill="#bfc4c8"/><rect x="4" y="3" width="6" height="1.2" fill="#e0cf6a"/><rect x="5.5" y="11" width="3" height="2" fill="#bfc4c8"/></svg>
<svg style="position:absolute;left:1157.70px;top:706.00px;" width="14" height="14" viewBox="0 0 14 14"><rect x="0" y="1" width="11" height="13" rx="1" fill="#f3e58a"/><circle cx="8.5" cy="8.5" r="5" fill="#eeeeee"/></svg>
<svg style="position:absolute;left:1177.80px;top:707.00px;" width="9.5" height="12" viewBox="0 0 9.5 12"><path d="M4.75 1C7.5 1 8 3.5 8 6V8.5L9.2 10H0.3L1.5 8.5V6C1.5 3.5 2 1 4.75 1Z" fill="#e8e8e8"/><circle cx="4.75" cy="11" r="1.2" fill="#e8e8e8"/></svg>
<div class="" style="position:absolute;left:1196.60px;top:706.50px;width:10.40px;height:13.50px;background:#9a9a9a"></div>
<svg style="position:absolute;left:1198.00px;top:709.00px;" width="8" height="6" viewBox="0 0 8 6"><path d="M1 5L4 1.5L7 5Z" fill="#555"/></svg>
<svg style="position:absolute;left:1214.70px;top:707.00px;" width="13" height="12" viewBox="0 0 13 12"><path d="M0.5 4H3L6.5 1V11L3 8H0.5Z" fill="#e8e8e8"/><path d="M8.3 3.5C9.5 5 9.5 7 8.3 8.5M10 2C12 4 12 8 10 10" stroke="#e8e8e8" stroke-width="1.3" fill="none"/></svg>
<div style="position:absolute;white-space:nowrap;left:1233.50px;top:706.66px;font-size:10.8px;line-height:14px;color:#d5dbe0;transform:scaleX(0.925);transform-origin:0 0;">12:35</div>
<svg style="position:absolute;left:1267.00px;top:706.50px;" width="11" height="12" viewBox="0 0 11 12"><path d="M3 2.8A4.6 4.6 0 1 0 8 2.8" stroke="#e8e8e8" stroke-width="1.5" fill="none"/><path d="M5.5 0.5V6" stroke="#e8e8e8" stroke-width="1.5"/></svg>
</body></html>
